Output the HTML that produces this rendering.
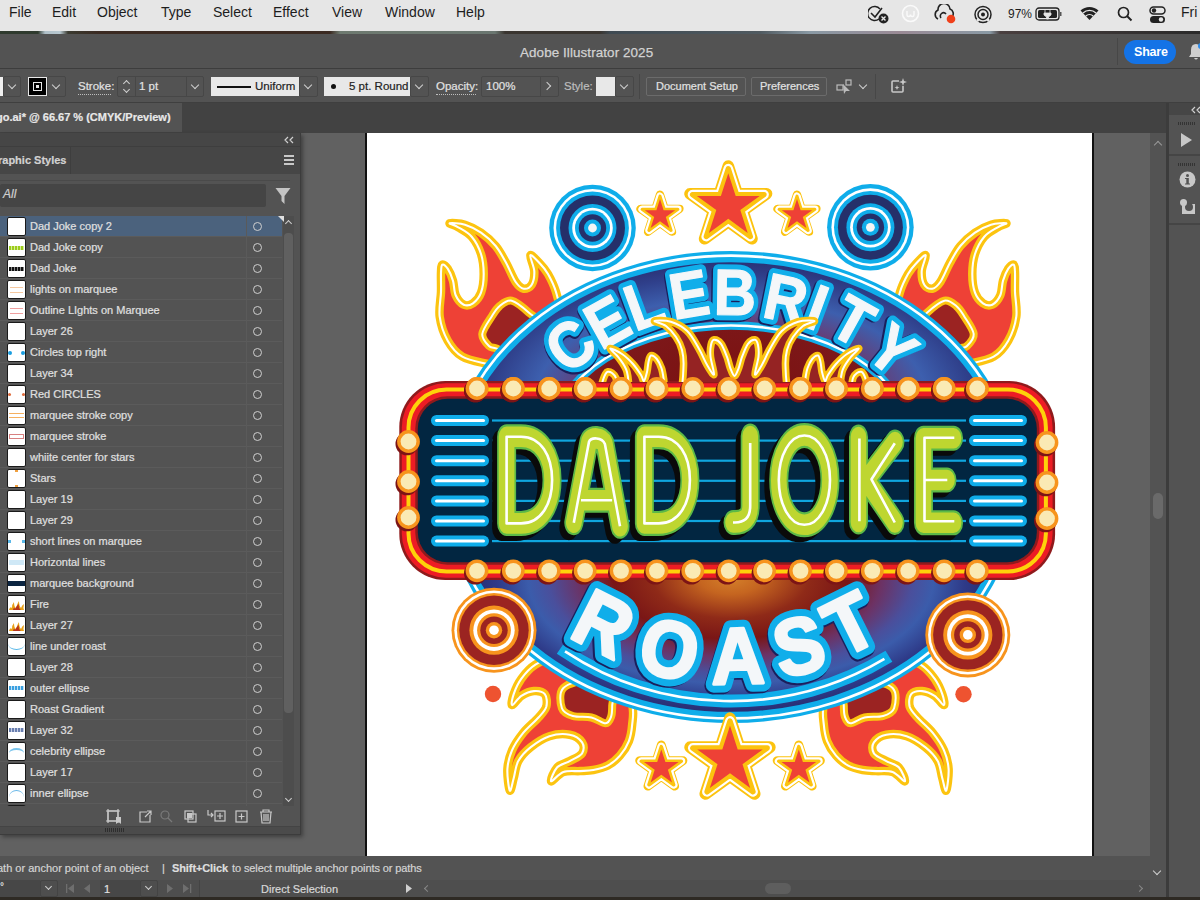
<!DOCTYPE html>
<html><head><meta charset="utf-8">
<style>
*{margin:0;padding:0;box-sizing:border-box}
html,body{width:1200px;height:900px;overflow:hidden;background:#535353;font-family:"Liberation Sans",sans-serif}
.a{position:absolute}
.t{position:absolute;white-space:pre;line-height:1}
#ctrl .t,#tabbar .t,#status .t,#bottombar .t,.row .nm,#panel .t{-webkit-text-stroke:0.2px currentColor}
#menubar{left:0;top:0;width:1200px;height:31px;background:#e6e6e6}
#menubar .t{font-size:14px;color:#1d1d1d;top:5px}
#wall{left:0;top:31px;width:1200px;height:3px;background:linear-gradient(90deg,#2f3a2e 0px,#2f3a2e 38px,#b0c0c8 45px,#b8c8d0 60px,#3a3a30 68px,#3b2a22 100px,#3b2a22 330px,#6e7a70 340px,#6a7670 495px,#3a3530 505px,#3a3530 600px,#3f4a52 610px,#505a60 760px,#8a9aa5 810px,#9a8a95 900px,#8a9aa5 990px,#4a4040 1000px,#2a2a2a 1200px)}
#titlebar{left:0;top:34px;width:1200px;height:35px;background:#535353;border-bottom:1px solid #3d3d3d}
#ctrl{left:0;top:69px;width:1200px;height:34px;background:#535353;border-bottom:1px solid #3f3f3f}
#tabbar{left:0;top:103px;width:1200px;height:30px;background:#424242}
#canvas{left:0;top:133px;width:1150px;height:723px;background:#616161}
#status{left:0;top:856px;width:1150px;height:24px;background:#535353}
#bottombar{left:0;top:880px;width:1150px;height:17px;background:#4e4e4e}
#wall2{left:0;top:897px;width:1200px;height:3px;background:#2e2a24}
#vscroll{left:1150px;top:133px;width:16px;height:723px;background:#535353}
#rdiv{left:1166px;top:103px;width:3px;height:797px;background:#3c3c3c}
#rpanel{left:1169px;top:103px;width:31px;height:794px;background:#535353}
.lt{color:#e2e2e2;font-size:11px}
.box{position:absolute;border:1px solid #474747;border-radius:2px}
.chev{position:absolute;width:6px;height:6px;border-right:1.3px solid #d0d0d0;border-bottom:1.3px solid #d0d0d0;transform:rotate(45deg)}
#panel{left:0;top:133px;width:301px;height:702px;background:#535353;border-right:1px solid #3c3c3c;border-bottom:1px solid #3c3c3c;box-shadow:2px 2px 4px rgba(0,0,0,0.35)}
.row{position:absolute;left:0;width:282px;height:21px;background:#535353;border-bottom:1px solid #5b5b5b}
.row .th{position:absolute;left:7px;top:1px;width:19px;height:19px;background:#fff;border:1.5px solid #1a1a1a;border-radius:2px;overflow:hidden}
.row .nm{position:absolute;left:30px;top:5px;font-size:11px;color:#e0e0e0;white-space:pre;line-height:1}
.row .dv{position:absolute;left:246px;top:0;width:1px;height:21px;background:#5a5a5a}
.row .ci{position:absolute;left:253px;top:6px;width:9px;height:9px;border:1.2px solid #cfcfcf;border-radius:50%}
</style></head><body>
<div id="menubar" class="a">
 <span class="t" style="left:9px">File</span>
 <span class="t" style="left:52px">Edit</span>
 <span class="t" style="left:97px">Object</span>
 <span class="t" style="left:161px">Type</span>
 <span class="t" style="left:213px">Select</span>
 <span class="t" style="left:273px">Effect</span>
 <span class="t" style="left:332px">View</span>
 <span class="t" style="left:385px">Window</span>
 <span class="t" style="left:456px">Help</span>

 <svg class="a" style="left:868px;top:5px" width="24" height="20" viewBox="0 0 24 20"><path d="M3 8 L7 12 L14 3" fill="none" stroke="#222" stroke-width="1.6"/><path d="M12 4 A7 7 0 1 0 11 14" fill="none" stroke="#222" stroke-width="1.4"/><circle cx="15.5" cy="13.5" r="5" fill="#222"/><path d="M13.5 11.5 L17.5 15.5 M17.5 11.5 L13.5 15.5" stroke="#e6e6e6" stroke-width="1.4"/></svg>
 <svg class="a" style="left:901px;top:4px" width="19" height="19" viewBox="0 0 19 19"><circle cx="9.5" cy="9.5" r="8" fill="none" stroke="#fafafa" stroke-width="1.6"/><path d="M6 7 V11 Q6 12.5 7.5 12.5 Q9.5 12.5 9.5 10.5 Q9.5 12.5 11.5 12.5 Q13 12.5 13 11 V7" fill="none" stroke="#fafafa" stroke-width="1.4"/></svg>
 <svg class="a" style="left:933px;top:4px" width="24" height="20" viewBox="0 0 24 20"><path d="M5 15 A5 5 0 0 1 5 6 A6 6 0 0 1 17 5 A5 5 0 0 1 19 13" fill="none" stroke="#222" stroke-width="1.6"/><path d="M8 14 A3 3 0 0 1 13 10" fill="none" stroke="#222" stroke-width="1.6"/><circle cx="18" cy="15" r="4.3" fill="#f0401a"/></svg>
 <svg class="a" style="left:973px;top:5px" width="20" height="20" viewBox="0 0 20 20"><circle cx="10" cy="9.5" r="8" fill="none" stroke="#222" stroke-width="1.5"/><circle cx="10" cy="9.5" r="5" fill="none" stroke="#222" stroke-width="1.5"/><circle cx="10" cy="9.5" r="2" fill="#222"/><path d="M4 16 L6 14 M16 16 L14 14" stroke="#e6e6e6" stroke-width="2.5"/></svg>
 <svg class="a" style="left:1035px;top:7px" width="28" height="15" viewBox="0 0 28 15"><rect x="1" y="1" width="23" height="12" rx="3" fill="none" stroke="#222" stroke-width="1.3"/><rect x="3" y="3" width="19" height="8" rx="1.5" fill="#222"/><path d="M10 3 V6 M15 3 V6 M9 6 H16 V8 L13.5 10 V12 H11.5 V10 L9 8Z" fill="#e6e6e6" stroke="#e6e6e6" stroke-width="0.8"/><rect x="25" y="5" width="1.5" height="4" fill="#555"/></svg>
 <svg class="a" style="left:1080px;top:6px" width="19" height="15" viewBox="0 0 19 15"><path d="M9.5 14 L0.5 4.5 A13 13 0 0 1 18.5 4.5Z" fill="#222"/><path d="M3 7 A9.5 9.5 0 0 1 16 7" fill="none" stroke="#e6e6e6" stroke-width="1.3"/><path d="M5.8 10 A5.5 5.5 0 0 1 13.2 10" fill="none" stroke="#e6e6e6" stroke-width="1.3"/></svg>
 <svg class="a" style="left:1117px;top:6px" width="16" height="16" viewBox="0 0 16 16"><circle cx="6.5" cy="6.5" r="5" fill="none" stroke="#222" stroke-width="1.7"/><path d="M10 10 L14.5 14.5" stroke="#222" stroke-width="1.9"/></svg>
 <svg class="a" style="left:1149px;top:6px" width="17" height="18" viewBox="0 0 17 18"><rect x="1" y="1" width="15" height="7" rx="3.5" fill="none" stroke="#222" stroke-width="1.5"/><circle cx="5" cy="4.5" r="2.2" fill="#222"/><rect x="1" y="10" width="15" height="7" rx="3.5" fill="#222"/><circle cx="12" cy="13.5" r="2.2" fill="#e6e6e6"/></svg>
 <span class="t" style="left:1008px;top:8px;font-size:12px">97%</span>
 <span class="t" style="left:1181px">Fri</span>
</div>
<div id="wall" class="a"></div>
<div id="titlebar" class="a">
 <span class="t" style="left:520px;top:12px;font-size:13.4px;color:#d2d2d2;-webkit-text-stroke:0.25px #d2d2d2;letter-spacing:0.1px">Adobe Illustrator 2025</span>
 <div class="a" style="left:1117px;top:4px;width:1px;height:27px;background:#474747"></div>
 <div class="a" style="left:1124px;top:6px;width:52px;height:24px;border-radius:12px;background:#1473e6"></div>
 <span class="t" style="left:1134px;top:12px;font-size:12.5px;font-weight:bold;color:#fff;letter-spacing:-0.2px">Share</span>
 <svg class="a" style="left:1188px;top:8px" width="16" height="20" viewBox="0 0 16 20"><path d="M8 2 Q3 2 3 8 V12 L1 15 H15 L13 12 V8 Q13 2 8 2Z M6 16 Q8 19 10 16Z" fill="#cfcfcf"/><circle cx="13" cy="4" r="3" fill="#2d8ceb"/></svg>
</div>
<div id="ctrl" class="a">
 <div class="a" style="left:0;top:8px;width:3px;height:19px;background:#f0f0f0"></div>
 <div class="box" style="left:3px;top:7px;width:18px;height:21px"></div>
 <div class="chev" style="left:9px;top:13px"></div>
 <div class="a" style="left:28px;top:8px;width:19px;height:19px;background:#000;border:1.5px solid #e8e8e8"></div>
 <div class="a" style="left:33px;top:13px;width:9px;height:9px;border:1.5px solid #e8e8e8"></div>
 <div class="a" style="left:36px;top:16px;width:3px;height:3px;background:#e8e8e8"></div>
 <div class="box" style="left:47px;top:7px;width:19px;height:21px"></div>
 <div class="chev" style="left:53px;top:13px"></div>
 <span class="t lt" style="left:78px;top:12px;font-size:11.5px">Stroke:</span>
 <div class="a" style="left:78px;top:25px;width:33px;height:0;border-top:1px dotted #bdbdbd"></div>
 <div class="box" style="left:117px;top:7px;width:87px;height:21px"></div>
 <div class="a" style="left:135px;top:7px;width:1px;height:21px;background:#474747"></div>
 <div class="a" style="left:186px;top:7px;width:1px;height:21px;background:#474747"></div>
 <div class="chev" style="left:124px;top:12px;transform:rotate(225deg);width:5px;height:5px"></div>
 <div class="chev" style="left:124px;top:18px;width:5px;height:5px"></div>
 <span class="t lt" style="left:139px;top:12px;font-size:11.5px">1 pt</span>
 <div class="chev" style="left:192px;top:13px"></div>
 <div class="a" style="left:211px;top:8px;width:88px;height:19px;background:#e8e8e8"></div>
 <div class="a" style="left:217px;top:17px;width:34px;height:2px;background:#111"></div>
 <span class="t" style="left:255px;top:12px;font-size:11.5px;color:#222">Uniform</span>
 <div class="box" style="left:299px;top:7px;width:19px;height:21px"></div>
 <div class="chev" style="left:305px;top:13px"></div>
 <div class="a" style="left:324px;top:8px;width:86px;height:19px;background:#e8e8e8"></div>
 <div class="a" style="left:331px;top:15px;width:5px;height:5px;border-radius:50%;background:#111"></div>
 <span class="t" style="left:349px;top:12px;font-size:11.5px;color:#222">5 pt. Round</span>
 <div class="box" style="left:410px;top:7px;width:19px;height:21px"></div>
 <div class="chev" style="left:416px;top:13px"></div>
 <span class="t lt" style="left:436px;top:12px;font-size:11.5px">Opacity:</span>
 <div class="a" style="left:436px;top:25px;width:40px;height:0;border-top:1px dotted #bdbdbd"></div>
 <div class="box" style="left:481px;top:7px;width:78px;height:21px"></div>
 <div class="a" style="left:540px;top:7px;width:1px;height:21px;background:#474747"></div>
 <span class="t lt" style="left:486px;top:12px;font-size:11.5px">100%</span>
 <div class="chev" style="left:544px;top:14px;transform:rotate(-45deg)"></div>
 <span class="t" style="left:564px;top:12px;font-size:11.5px;color:#bdbdbd">Style:</span>
 <div class="a" style="left:596px;top:8px;width:19px;height:19px;background:#e8e8e8"></div>
 <div class="box" style="left:615px;top:7px;width:19px;height:21px"></div>
 <div class="chev" style="left:621px;top:13px"></div>
 <div class="a" style="left:639px;top:5px;width:1px;height:25px;background:#474747"></div>
 <div class="box" style="left:646px;top:8px;width:100px;height:19px;border-color:#6b6b6b"></div>
 <span class="t lt" style="left:656px;top:12px;font-size:11px">Document Setup</span>
 <div class="box" style="left:751px;top:8px;width:76px;height:19px;border-color:#6b6b6b"></div>
 <span class="t lt" style="left:760px;top:12px;font-size:11px">Preferences</span>
 <svg class="a" style="left:836px;top:10px" width="18" height="16" viewBox="0 0 18 16"><rect x="1" y="6" width="6" height="5" fill="none" stroke="#bbb" stroke-width="1.2"/><rect x="10" y="1" width="5" height="5" fill="none" stroke="#bbb" stroke-width="1.2"/><path d="M7 5 L14 12 L10 12 L8 15 Z" fill="#bbb"/></svg>
 <div class="chev" style="left:860px;top:13px"></div>
 <div class="a" style="left:875px;top:5px;width:1px;height:25px;background:#474747"></div>
 <svg class="a" style="left:890px;top:9px" width="17" height="16" viewBox="0 0 17 16"><path d="M9 3 H3 Q2 3 2 4 V13 Q2 14 3 14 H12 Q13 14 13 13 V8" fill="none" stroke="#c8c8c8" stroke-width="1.6"/><path d="M13 0 L14 3 L17 4 L14 5 L13 8 L12 5 L9 4 L12 3Z M7 7 L7.7 9 L9.5 9.6 L7.7 10.3 L7 12 L6.3 10.3 L4.5 9.6 L6.3 9Z" fill="#c8c8c8"/></svg>
</div>
<div id="tabbar" class="a">
 <div class="a" style="left:0;top:0;width:182px;height:29px;background:#535353"></div>
 <span class="t" style="left:-4px;top:9px;font-size:11px;font-weight:bold;color:#e8e8e8">go.ai* @ 66.67 % (CMYK/Preview)</span>
</div>
<div id="canvas" class="a">
 <div class="a" style="left:365px;top:0;width:729px;height:723px;background:#fff;border-left:2px solid #111;border-right:2px solid #111"></div>
 <svg class="a" style="left:367px;top:0" width="725" height="723" viewBox="367 133 725 723">
<defs>
<radialGradient id="upg" gradientUnits="userSpaceOnUse" cx="731" cy="400" r="280" gradientTransform="translate(731 400) scale(1 0.52) translate(-731 -400)">
 <stop offset="0" stop-color="#c05a1c"/>
 <stop offset="0.42" stop-color="#7a1e2a"/>
 <stop offset="0.52" stop-color="#6b3a70"/>
 <stop offset="0.70" stop-color="#3d5fae"/>
 <stop offset="0.86" stop-color="#2f3f8a"/>
 <stop offset="1" stop-color="#272b6b"/>
</radialGradient>
<radialGradient id="lowg" gradientUnits="userSpaceOnUse" cx="731" cy="578" r="260" gradientTransform="translate(731 578) scale(1 0.52) translate(-731 -578)">
 <stop offset="0" stop-color="#d5802a"/>
 <stop offset="0.12" stop-color="#c56520"/>
 <stop offset="0.30" stop-color="#8f2a18"/>
 <stop offset="0.45" stop-color="#7a1616"/>
 <stop offset="0.58" stop-color="#6c3264"/>
 <stop offset="0.70" stop-color="#4a4f9c"/>
 <stop offset="0.78" stop-color="#3b5cab"/>
 <stop offset="0.90" stop-color="#2e3a88"/>
 <stop offset="1" stop-color="#282d70"/>
</radialGradient>
<clipPath id="topclip"><rect x="400" y="250" width="660" height="132"/></clipPath>
<clipPath id="domeclip"><ellipse cx="731" cy="487" rx="285" ry="233"/></clipPath>
<radialGradient id="innerg" gradientUnits="userSpaceOnUse" cx="733" cy="400" r="180" gradientTransform="translate(733 400) scale(1 0.7) translate(-733 -400)">
 <stop offset="0" stop-color="#b64a1e"/>
 <stop offset="0.35" stop-color="#7c1414"/>
 <stop offset="1" stop-color="#7d1c20"/>
</radialGradient>
<clipPath id="innerclip"><ellipse cx="731" cy="436.5" rx="175" ry="109"/></clipPath>
</defs>
<path d="M449.7 223.3 C450.8 222.9 459.8 223.1 465.0 224.7 C470.2 226.3 475.9 229.1 481.0 232.7 C486.1 236.2 491.5 240.9 495.7 246.0 C499.9 251.1 503.0 257.3 506.3 263.3 C509.6 269.3 512.8 277.8 515.7 282.0 C518.6 286.2 521.0 288.2 523.7 288.7 C526.4 289.1 529.9 287.6 531.7 284.7 C533.5 281.8 534.5 276.2 534.3 271.3 C534.1 266.4 529.4 256.6 530.3 255.3 C531.2 254.0 536.8 260.2 539.7 263.3 C542.7 266.4 545.3 269.2 548.0 274.0 C550.7 278.8 553.7 284.3 556.0 292.0 C558.3 299.7 561.3 310.3 562.0 320.0 C562.7 329.7 563.7 341.3 560.0 350.0 C556.3 358.7 548.3 369.0 540.0 372.0 C531.7 375.0 518.7 369.3 510.0 368.0 C501.3 366.7 495.6 365.9 487.7 364.0 C479.8 362.1 469.0 360.6 462.3 356.7 C455.6 352.8 451.5 347.4 447.7 340.7 C443.9 334.0 440.8 324.8 439.7 316.7 C438.6 308.6 440.8 299.3 441.0 292.0 C441.2 284.7 440.8 277.2 441.0 272.7 C441.2 268.1 441.2 265.4 442.3 264.7 C443.4 264.0 445.9 266.0 447.7 268.7 C449.5 271.4 451.7 276.3 453.0 280.7 C454.3 285.1 453.9 291.3 455.7 295.3 C457.5 299.3 460.8 303.4 463.7 304.7 C466.6 306.0 470.1 305.3 473.0 303.3 C475.9 301.3 479.2 297.6 481.0 292.7 C482.8 287.8 483.7 280.4 483.7 274.0 C483.7 267.6 483.0 260.2 481.0 254.0 C479.0 247.8 475.5 241.1 471.7 236.7 C467.9 232.2 462.0 229.5 458.3 227.3 C454.6 225.1 448.6 223.7 449.7 223.3Z" fill="#ee4136" stroke="#fcc410" stroke-width="8.5" stroke-linejoin="round"/><path d="M449.7 223.3 C450.8 222.9 459.8 223.1 465.0 224.7 C470.2 226.3 475.9 229.1 481.0 232.7 C486.1 236.2 491.5 240.9 495.7 246.0 C499.9 251.1 503.0 257.3 506.3 263.3 C509.6 269.3 512.8 277.8 515.7 282.0 C518.6 286.2 521.0 288.2 523.7 288.7 C526.4 289.1 529.9 287.6 531.7 284.7 C533.5 281.8 534.5 276.2 534.3 271.3 C534.1 266.4 529.4 256.6 530.3 255.3 C531.2 254.0 536.8 260.2 539.7 263.3 C542.7 266.4 545.3 269.2 548.0 274.0 C550.7 278.8 553.7 284.3 556.0 292.0 C558.3 299.7 561.3 310.3 562.0 320.0 C562.7 329.7 563.7 341.3 560.0 350.0 C556.3 358.7 548.3 369.0 540.0 372.0 C531.7 375.0 518.7 369.3 510.0 368.0 C501.3 366.7 495.6 365.9 487.7 364.0 C479.8 362.1 469.0 360.6 462.3 356.7 C455.6 352.8 451.5 347.4 447.7 340.7 C443.9 334.0 440.8 324.8 439.7 316.7 C438.6 308.6 440.8 299.3 441.0 292.0 C441.2 284.7 440.8 277.2 441.0 272.7 C441.2 268.1 441.2 265.4 442.3 264.7 C443.4 264.0 445.9 266.0 447.7 268.7 C449.5 271.4 451.7 276.3 453.0 280.7 C454.3 285.1 453.9 291.3 455.7 295.3 C457.5 299.3 460.8 303.4 463.7 304.7 C466.6 306.0 470.1 305.3 473.0 303.3 C475.9 301.3 479.2 297.6 481.0 292.7 C482.8 287.8 483.7 280.4 483.7 274.0 C483.7 267.6 483.0 260.2 481.0 254.0 C479.0 247.8 475.5 241.1 471.7 236.7 C467.9 232.2 462.0 229.5 458.3 227.3 C454.6 225.1 448.6 223.7 449.7 223.3Z" fill="none" stroke="#fff" stroke-width="2.1"/><path d="M482.3 334.0 C482.8 329.0 489.1 320.7 492.0 316.0 C494.9 311.3 496.4 308.6 499.7 306.0 C503.0 303.4 506.8 299.6 511.7 300.7 C516.6 301.8 523.5 307.8 529.0 312.7 C534.5 317.6 546.5 322.1 545.0 330.0 C543.5 337.9 528.0 356.9 520.0 360.0 C512.0 363.1 502.2 351.0 497.0 348.7 C491.8 346.4 491.4 348.4 489.0 346.0 C486.6 343.6 481.8 339.0 482.3 334.0Z" fill="#9b2322" stroke="#fcc410" stroke-width="8" stroke-linejoin="round"/><path d="M482.3 334.0 C482.8 329.0 489.1 320.7 492.0 316.0 C494.9 311.3 496.4 308.6 499.7 306.0 C503.0 303.4 506.8 299.6 511.7 300.7 C516.6 301.8 523.5 307.8 529.0 312.7 C534.5 317.6 546.5 322.1 545.0 330.0 C543.5 337.9 528.0 356.9 520.0 360.0 C512.0 363.1 502.2 351.0 497.0 348.7 C491.8 346.4 491.4 348.4 489.0 346.0 C486.6 343.6 481.8 339.0 482.3 334.0Z" fill="none" stroke="#fff" stroke-width="2"/>
<path d="M1006.3 223.3 C1005.2 222.9 996.2 223.1 991.0 224.7 C985.8 226.3 980.1 229.1 975.0 232.7 C969.9 236.2 964.5 240.9 960.3 246.0 C956.1 251.1 953.0 257.3 949.7 263.3 C946.4 269.3 943.2 277.8 940.3 282.0 C937.4 286.2 935.0 288.2 932.3 288.7 C929.6 289.1 926.1 287.6 924.3 284.7 C922.5 281.8 921.5 276.2 921.7 271.3 C921.9 266.4 926.6 256.6 925.7 255.3 C924.8 254.0 919.2 260.2 916.3 263.3 C913.3 266.4 910.7 269.2 908.0 274.0 C905.3 278.8 902.3 284.3 900.0 292.0 C897.7 299.7 894.7 310.3 894.0 320.0 C893.3 329.7 892.3 341.3 896.0 350.0 C899.7 358.7 907.7 369.0 916.0 372.0 C924.3 375.0 937.3 369.3 946.0 368.0 C954.7 366.7 960.3 365.9 968.3 364.0 C976.2 362.1 987.0 360.6 993.7 356.7 C1000.4 352.8 1004.5 347.4 1008.3 340.7 C1012.1 334.0 1015.2 324.8 1016.3 316.7 C1017.4 308.6 1015.2 299.3 1015.0 292.0 C1014.8 284.7 1015.2 277.2 1015.0 272.7 C1014.8 268.1 1014.8 265.4 1013.7 264.7 C1012.6 264.0 1010.1 266.0 1008.3 268.7 C1006.5 271.4 1004.3 276.3 1003.0 280.7 C1001.7 285.1 1002.1 291.3 1000.3 295.3 C998.5 299.3 995.2 303.4 992.3 304.7 C989.4 306.0 985.9 305.3 983.0 303.3 C980.1 301.3 976.8 297.6 975.0 292.7 C973.2 287.8 972.3 280.4 972.3 274.0 C972.3 267.6 973.0 260.2 975.0 254.0 C977.0 247.8 980.5 241.1 984.3 236.7 C988.1 232.2 994.0 229.5 997.7 227.3 C1001.4 225.1 1007.4 223.7 1006.3 223.3Z" fill="#ee4136" stroke="#fcc410" stroke-width="8.5" stroke-linejoin="round"/><path d="M1006.3 223.3 C1005.2 222.9 996.2 223.1 991.0 224.7 C985.8 226.3 980.1 229.1 975.0 232.7 C969.9 236.2 964.5 240.9 960.3 246.0 C956.1 251.1 953.0 257.3 949.7 263.3 C946.4 269.3 943.2 277.8 940.3 282.0 C937.4 286.2 935.0 288.2 932.3 288.7 C929.6 289.1 926.1 287.6 924.3 284.7 C922.5 281.8 921.5 276.2 921.7 271.3 C921.9 266.4 926.6 256.6 925.7 255.3 C924.8 254.0 919.2 260.2 916.3 263.3 C913.3 266.4 910.7 269.2 908.0 274.0 C905.3 278.8 902.3 284.3 900.0 292.0 C897.7 299.7 894.7 310.3 894.0 320.0 C893.3 329.7 892.3 341.3 896.0 350.0 C899.7 358.7 907.7 369.0 916.0 372.0 C924.3 375.0 937.3 369.3 946.0 368.0 C954.7 366.7 960.3 365.9 968.3 364.0 C976.2 362.1 987.0 360.6 993.7 356.7 C1000.4 352.8 1004.5 347.4 1008.3 340.7 C1012.1 334.0 1015.2 324.8 1016.3 316.7 C1017.4 308.6 1015.2 299.3 1015.0 292.0 C1014.8 284.7 1015.2 277.2 1015.0 272.7 C1014.8 268.1 1014.8 265.4 1013.7 264.7 C1012.6 264.0 1010.1 266.0 1008.3 268.7 C1006.5 271.4 1004.3 276.3 1003.0 280.7 C1001.7 285.1 1002.1 291.3 1000.3 295.3 C998.5 299.3 995.2 303.4 992.3 304.7 C989.4 306.0 985.9 305.3 983.0 303.3 C980.1 301.3 976.8 297.6 975.0 292.7 C973.2 287.8 972.3 280.4 972.3 274.0 C972.3 267.6 973.0 260.2 975.0 254.0 C977.0 247.8 980.5 241.1 984.3 236.7 C988.1 232.2 994.0 229.5 997.7 227.3 C1001.4 225.1 1007.4 223.7 1006.3 223.3Z" fill="none" stroke="#fff" stroke-width="2.1"/><path d="M973.7 334.0 C973.2 329.0 966.9 320.7 964.0 316.0 C961.1 311.3 959.6 308.6 956.3 306.0 C953.0 303.4 949.2 299.6 944.3 300.7 C939.4 301.8 932.5 307.8 927.0 312.7 C921.5 317.6 909.5 322.1 911.0 330.0 C912.5 337.9 928.0 356.9 936.0 360.0 C944.0 363.1 953.8 351.0 959.0 348.7 C964.2 346.4 964.5 348.4 967.0 346.0 C969.5 343.6 974.2 339.0 973.7 334.0Z" fill="#9b2322" stroke="#fcc410" stroke-width="8" stroke-linejoin="round"/><path d="M973.7 334.0 C973.2 329.0 966.9 320.7 964.0 316.0 C961.1 311.3 959.6 308.6 956.3 306.0 C953.0 303.4 949.2 299.6 944.3 300.7 C939.4 301.8 932.5 307.8 927.0 312.7 C921.5 317.6 909.5 322.1 911.0 330.0 C912.5 337.9 928.0 356.9 936.0 360.0 C944.0 363.1 953.8 351.0 959.0 348.7 C964.2 346.4 964.5 348.4 967.0 346.0 C969.5 343.6 974.2 339.0 973.7 334.0Z" fill="none" stroke="#fff" stroke-width="2"/>
<path d="M535.4 664.7 C529.0 668.7 525.0 673.8 521.4 678.7 C517.8 683.6 515.2 689.8 513.7 694.2 C512.2 698.6 510.8 704.8 512.1 705.1 C513.4 705.4 517.8 698.1 521.4 695.8 C525.0 693.5 530.0 691.4 533.9 691.1 C537.8 690.8 542.7 691.6 544.8 694.2 C546.9 696.8 547.3 702.8 546.3 706.7 C545.2 710.6 542.4 713.1 538.5 717.5 C534.6 721.9 527.4 727.6 523.0 733.1 C518.6 738.6 514.7 744.2 512.1 750.2 C509.5 756.2 507.8 762.2 507.4 768.9 C507.0 775.6 508.8 789.0 509.8 790.6 C510.9 792.2 512.3 783.1 513.7 778.2 C515.1 773.3 515.4 766.3 518.3 761.1 C521.1 755.9 525.6 751.2 530.8 747.1 C536.0 743.0 542.9 738.3 549.4 736.2 C555.9 734.1 564.2 733.7 569.7 734.7 C575.2 735.7 580.0 739.3 582.1 742.4 C584.2 745.5 584.2 750.2 582.1 753.3 C580.0 756.4 573.9 758.8 569.7 761.1 C565.6 763.4 560.3 763.9 557.2 767.3 C554.1 770.7 550.0 780.5 551.0 781.3 C552.0 782.1 558.6 773.7 563.4 772.0 C568.2 770.3 575.0 771.4 580.0 771.1 C585.0 770.8 588.7 770.9 593.3 770.0 C597.9 769.1 603.3 768.0 607.8 765.6 C612.2 763.2 616.5 759.7 620.0 755.6 C623.5 751.5 626.9 746.3 628.9 741.1 C630.9 735.9 631.7 730.4 632.2 724.4 C632.8 718.4 634.2 712.4 632.2 705.0 C630.2 697.6 627.0 687.2 620.0 680.0 C613.0 672.8 600.0 666.2 590.0 662.0 C580.0 657.8 569.1 654.5 560.0 655.0 C550.9 655.5 541.8 660.8 535.4 664.7Z" fill="#ee4136" stroke="#fcc410" stroke-width="8.5" stroke-linejoin="round"/><path d="M535.4 664.7 C529.0 668.7 525.0 673.8 521.4 678.7 C517.8 683.6 515.2 689.8 513.7 694.2 C512.2 698.6 510.8 704.8 512.1 705.1 C513.4 705.4 517.8 698.1 521.4 695.8 C525.0 693.5 530.0 691.4 533.9 691.1 C537.8 690.8 542.7 691.6 544.8 694.2 C546.9 696.8 547.3 702.8 546.3 706.7 C545.2 710.6 542.4 713.1 538.5 717.5 C534.6 721.9 527.4 727.6 523.0 733.1 C518.6 738.6 514.7 744.2 512.1 750.2 C509.5 756.2 507.8 762.2 507.4 768.9 C507.0 775.6 508.8 789.0 509.8 790.6 C510.9 792.2 512.3 783.1 513.7 778.2 C515.1 773.3 515.4 766.3 518.3 761.1 C521.1 755.9 525.6 751.2 530.8 747.1 C536.0 743.0 542.9 738.3 549.4 736.2 C555.9 734.1 564.2 733.7 569.7 734.7 C575.2 735.7 580.0 739.3 582.1 742.4 C584.2 745.5 584.2 750.2 582.1 753.3 C580.0 756.4 573.9 758.8 569.7 761.1 C565.6 763.4 560.3 763.9 557.2 767.3 C554.1 770.7 550.0 780.5 551.0 781.3 C552.0 782.1 558.6 773.7 563.4 772.0 C568.2 770.3 575.0 771.4 580.0 771.1 C585.0 770.8 588.7 770.9 593.3 770.0 C597.9 769.1 603.3 768.0 607.8 765.6 C612.2 763.2 616.5 759.7 620.0 755.6 C623.5 751.5 626.9 746.3 628.9 741.1 C630.9 735.9 631.7 730.4 632.2 724.4 C632.8 718.4 634.2 712.4 632.2 705.0 C630.2 697.6 627.0 687.2 620.0 680.0 C613.0 672.8 600.0 666.2 590.0 662.0 C580.0 657.8 569.1 654.5 560.0 655.0 C550.9 655.5 541.8 660.8 535.4 664.7Z" fill="none" stroke="#fff" stroke-width="2.1"/><path d="M563.4 688.0 C558.7 692.7 560.3 703.5 561.9 708.2 C563.5 712.9 567.9 714.5 572.8 716.0 C577.7 717.5 585.9 716.3 591.4 717.5 C596.9 718.7 602.3 723.4 605.6 723.3 C608.9 723.2 610.0 719.7 611.1 716.7 C612.2 713.8 612.1 710.1 612.2 705.6 C612.4 701.1 615.7 694.3 612.0 690.0 C608.3 685.7 598.1 680.3 590.0 680.0 C581.9 679.7 568.1 683.3 563.4 688.0Z" fill="#9b2322" stroke="#fcc410" stroke-width="8" stroke-linejoin="round"/><path d="M563.4 688.0 C558.7 692.7 560.3 703.5 561.9 708.2 C563.5 712.9 567.9 714.5 572.8 716.0 C577.7 717.5 585.9 716.3 591.4 717.5 C596.9 718.7 602.3 723.4 605.6 723.3 C608.9 723.2 610.0 719.7 611.1 716.7 C612.2 713.8 612.1 710.1 612.2 705.6 C612.4 701.1 615.7 694.3 612.0 690.0 C608.3 685.7 598.1 680.3 590.0 680.0 C581.9 679.7 568.1 683.3 563.4 688.0Z" fill="none" stroke="#fff" stroke-width="2"/>
<path d="M920.6 664.7 C927.0 668.7 931.0 673.8 934.6 678.7 C938.2 683.6 940.8 689.8 942.3 694.2 C943.8 698.6 945.2 704.8 943.9 705.1 C942.6 705.4 938.2 698.1 934.6 695.8 C931.0 693.5 926.0 691.4 922.1 691.1 C918.2 690.8 913.3 691.6 911.2 694.2 C909.1 696.8 908.7 702.8 909.7 706.7 C910.8 710.6 913.6 713.1 917.5 717.5 C921.4 721.9 928.6 727.6 933.0 733.1 C937.4 738.6 941.3 744.2 943.9 750.2 C946.5 756.2 948.2 762.2 948.6 768.9 C949.0 775.6 947.2 789.0 946.2 790.6 C945.2 792.2 943.7 783.1 942.3 778.2 C940.9 773.3 940.6 766.3 937.7 761.1 C934.9 755.9 930.4 751.2 925.2 747.1 C920.0 743.0 913.1 738.3 906.6 736.2 C900.1 734.1 891.8 733.7 886.3 734.7 C880.8 735.7 876.0 739.3 873.9 742.4 C871.8 745.5 871.8 750.2 873.9 753.3 C876.0 756.4 882.1 758.8 886.3 761.1 C890.4 763.4 895.7 763.9 898.8 767.3 C901.9 770.7 906.0 780.5 905.0 781.3 C904.0 782.1 897.4 773.7 892.6 772.0 C887.8 770.3 881.0 771.4 876.0 771.1 C871.0 770.8 867.3 770.9 862.7 770.0 C858.1 769.1 852.7 768.0 848.2 765.6 C843.8 763.2 839.5 759.7 836.0 755.6 C832.5 751.5 829.1 746.3 827.1 741.1 C825.1 735.9 824.3 730.4 823.8 724.4 C823.2 718.4 821.8 712.4 823.8 705.0 C825.8 697.6 829.0 687.2 836.0 680.0 C843.0 672.8 856.0 666.2 866.0 662.0 C876.0 657.8 886.9 654.5 896.0 655.0 C905.1 655.5 914.2 660.8 920.6 664.7Z" fill="#ee4136" stroke="#fcc410" stroke-width="8.5" stroke-linejoin="round"/><path d="M920.6 664.7 C927.0 668.7 931.0 673.8 934.6 678.7 C938.2 683.6 940.8 689.8 942.3 694.2 C943.8 698.6 945.2 704.8 943.9 705.1 C942.6 705.4 938.2 698.1 934.6 695.8 C931.0 693.5 926.0 691.4 922.1 691.1 C918.2 690.8 913.3 691.6 911.2 694.2 C909.1 696.8 908.7 702.8 909.7 706.7 C910.8 710.6 913.6 713.1 917.5 717.5 C921.4 721.9 928.6 727.6 933.0 733.1 C937.4 738.6 941.3 744.2 943.9 750.2 C946.5 756.2 948.2 762.2 948.6 768.9 C949.0 775.6 947.2 789.0 946.2 790.6 C945.2 792.2 943.7 783.1 942.3 778.2 C940.9 773.3 940.6 766.3 937.7 761.1 C934.9 755.9 930.4 751.2 925.2 747.1 C920.0 743.0 913.1 738.3 906.6 736.2 C900.1 734.1 891.8 733.7 886.3 734.7 C880.8 735.7 876.0 739.3 873.9 742.4 C871.8 745.5 871.8 750.2 873.9 753.3 C876.0 756.4 882.1 758.8 886.3 761.1 C890.4 763.4 895.7 763.9 898.8 767.3 C901.9 770.7 906.0 780.5 905.0 781.3 C904.0 782.1 897.4 773.7 892.6 772.0 C887.8 770.3 881.0 771.4 876.0 771.1 C871.0 770.8 867.3 770.9 862.7 770.0 C858.1 769.1 852.7 768.0 848.2 765.6 C843.8 763.2 839.5 759.7 836.0 755.6 C832.5 751.5 829.1 746.3 827.1 741.1 C825.1 735.9 824.3 730.4 823.8 724.4 C823.2 718.4 821.8 712.4 823.8 705.0 C825.8 697.6 829.0 687.2 836.0 680.0 C843.0 672.8 856.0 666.2 866.0 662.0 C876.0 657.8 886.9 654.5 896.0 655.0 C905.1 655.5 914.2 660.8 920.6 664.7Z" fill="none" stroke="#fff" stroke-width="2.1"/><path d="M892.6 688.0 C897.3 692.7 895.7 703.5 894.1 708.2 C892.5 712.9 888.1 714.5 883.2 716.0 C878.3 717.5 870.1 716.3 864.6 717.5 C859.1 718.7 853.7 723.4 850.4 723.3 C847.1 723.2 846.0 719.7 844.9 716.7 C843.8 713.8 843.9 710.1 843.8 705.6 C843.6 701.1 840.3 694.3 844.0 690.0 C847.7 685.7 857.9 680.3 866.0 680.0 C874.1 679.7 887.9 683.3 892.6 688.0Z" fill="#9b2322" stroke="#fcc410" stroke-width="8" stroke-linejoin="round"/><path d="M892.6 688.0 C897.3 692.7 895.7 703.5 894.1 708.2 C892.5 712.9 888.1 714.5 883.2 716.0 C878.3 717.5 870.1 716.3 864.6 717.5 C859.1 718.7 853.7 723.4 850.4 723.3 C847.1 723.2 846.0 719.7 844.9 716.7 C843.8 713.8 843.9 710.1 843.8 705.6 C843.6 701.1 840.3 694.3 844.0 690.0 C847.7 685.7 857.9 680.3 866.0 680.0 C874.1 679.7 887.9 683.3 892.6 688.0Z" fill="none" stroke="#fff" stroke-width="2"/>
<g clip-path="url(#domeclip)"><rect x="440" y="250" width="590" height="230" fill="url(#upg)"/><rect x="440" y="480" width="590" height="250" fill="url(#lowg)"/></g>
<ellipse cx="731" cy="436.5" rx="177" ry="111" fill="url(#innerg)"/>
<ellipse cx="731" cy="436.5" rx="177" ry="111" fill="none" stroke="#12aee8" stroke-width="8.5"/>
<ellipse cx="731" cy="436.5" rx="177" ry="111" fill="none" stroke="#fff" stroke-width="2.6"/>
<ellipse cx="731" cy="487" rx="282.4" ry="230.4" fill="none" stroke="#0fadea" stroke-width="11.2"/>
<ellipse cx="731" cy="487" rx="283.4" ry="231.4" fill="none" stroke="#fff" stroke-width="2.6"/>
<path d="M560.5 648.3 A301 301 0 0 0 888.9 656.2" fill="none" stroke="#0fadea" stroke-width="13"/>
<path d="M565 651.4 A301 301 0 0 0 884.4 658.9" fill="none" stroke="#fff" stroke-width="2.6"/>
<circle cx="592.5" cy="228.0" r="43.3" fill="#0fadea"/><circle cx="592.5" cy="228.0" r="39.0" fill="#fff"/><circle cx="592.5" cy="228.0" r="36.4" fill="#0fadea"/><circle cx="592.5" cy="228.0" r="32.5" fill="#25306a"/><circle cx="592.5" cy="228.0" r="24.0" fill="#0fadea"/><circle cx="592.5" cy="228.0" r="20.3" fill="#fff"/><circle cx="592.5" cy="228.0" r="17.5" fill="#0fadea"/><circle cx="592.5" cy="228.0" r="13.7" fill="#25306a"/><circle cx="592.5" cy="228.0" r="8.5" fill="#0fadea"/><circle cx="592.5" cy="228.0" r="4.4" fill="#f4f6f6"/>
<circle cx="870.4" cy="227.3" r="43.3" fill="#0fadea"/><circle cx="870.4" cy="227.3" r="39.0" fill="#fff"/><circle cx="870.4" cy="227.3" r="36.4" fill="#0fadea"/><circle cx="870.4" cy="227.3" r="32.5" fill="#25306a"/><circle cx="870.4" cy="227.3" r="24.0" fill="#0fadea"/><circle cx="870.4" cy="227.3" r="20.3" fill="#fff"/><circle cx="870.4" cy="227.3" r="17.5" fill="#0fadea"/><circle cx="870.4" cy="227.3" r="13.7" fill="#25306a"/><circle cx="870.4" cy="227.3" r="8.5" fill="#0fadea"/><circle cx="870.4" cy="227.3" r="4.4" fill="#f4f6f6"/>
<circle cx="494.0" cy="630.2" r="42.5" fill="#f7941d"/><circle cx="494.0" cy="630.2" r="39.7" fill="#fff"/><circle cx="494.0" cy="630.2" r="37.1" fill="#f7941d"/><circle cx="494.0" cy="630.2" r="34.7" fill="#9b2421"/><circle cx="494.0" cy="630.2" r="24.6" fill="#f7941d"/><circle cx="494.0" cy="630.2" r="20.7" fill="#fff"/><circle cx="494.0" cy="630.2" r="16.9" fill="#f7941d"/><circle cx="494.0" cy="630.2" r="13.7" fill="#9b2421"/><circle cx="494.0" cy="630.2" r="8.2" fill="#f7941d"/><circle cx="494.0" cy="630.2" r="4.8" fill="#fff"/>
<circle cx="967.8" cy="634.9" r="42.5" fill="#f7941d"/><circle cx="967.8" cy="634.9" r="39.7" fill="#fff"/><circle cx="967.8" cy="634.9" r="37.1" fill="#f7941d"/><circle cx="967.8" cy="634.9" r="34.7" fill="#9b2421"/><circle cx="967.8" cy="634.9" r="24.6" fill="#f7941d"/><circle cx="967.8" cy="634.9" r="20.7" fill="#fff"/><circle cx="967.8" cy="634.9" r="16.9" fill="#f7941d"/><circle cx="967.8" cy="634.9" r="13.7" fill="#9b2421"/><circle cx="967.8" cy="634.9" r="8.2" fill="#f7941d"/><circle cx="967.8" cy="634.9" r="4.8" fill="#fff"/>
<circle cx="493" cy="694" r="8.2" fill="#ee5330"/><circle cx="963.5" cy="694.2" r="8.2" fill="#ee5330"/>
<path d="M728.3 166.0 L737.3 193.8 L766.6 193.8 L742.9 210.9 L752.0 238.8 L728.3 221.6 L704.6 238.8 L713.7 210.9 L690.0 193.8 L719.3 193.8Z" fill="#fcc30f" stroke="#fcc30f" stroke-width="11.53" stroke-linejoin="round"/><path d="M728.3 168.6 L736.7 194.6 L764.1 194.6 L742.0 210.6 L750.4 236.6 L728.3 220.6 L706.2 236.6 L714.6 210.6 L692.5 194.6 L719.9 194.6Z" fill="none" stroke="#fff" stroke-width="9.58" stroke-linejoin="round"/><path d="M728.3 168.6 L736.7 194.6 L764.1 194.6 L742.0 210.6 L750.4 236.6 L728.3 220.6 L706.2 236.6 L714.6 210.6 L692.5 194.6 L719.9 194.6Z" fill="#fcc30f" stroke="#fcc30f" stroke-width="5.18" stroke-linejoin="round"/><path d="M728.3 173.2 L735.7 196.0 L759.7 196.0 L740.3 210.1 L747.7 232.9 L728.3 218.8 L708.9 232.9 L716.3 210.1 L696.9 196.0 L720.9 196.0Z" fill="#ee4136"/>
<path d="M660.0 194.6 L664.6 208.8 L679.5 208.8 L667.4 217.5 L672.0 231.7 L660.0 222.9 L648.0 231.7 L652.6 217.5 L640.5 208.8 L655.4 208.8Z" fill="#fcc30f" stroke="#fcc30f" stroke-width="8.23" stroke-linejoin="round"/><path d="M660.0 196.2 L664.2 209.3 L677.9 209.3 L666.9 217.3 L671.1 230.4 L660.0 222.3 L648.9 230.4 L653.1 217.3 L642.1 209.3 L655.8 209.3Z" fill="none" stroke="#fff" stroke-width="7.47" stroke-linejoin="round"/><path d="M660.0 196.2 L664.2 209.3 L677.9 209.3 L666.9 217.3 L671.1 230.4 L660.0 222.3 L648.9 230.4 L653.1 217.3 L642.1 209.3 L655.8 209.3Z" fill="#fcc30f" stroke="#fcc30f" stroke-width="3.07" stroke-linejoin="round"/><path d="M660.0 199.1 L663.6 210.2 L675.2 210.2 L665.8 217.0 L669.4 228.0 L660.0 221.2 L650.6 228.0 L654.2 217.0 L644.8 210.2 L656.4 210.2Z" fill="#ee4136"/>
<path d="M797.0 194.6 L801.6 208.8 L816.5 208.8 L804.4 217.5 L809.0 231.7 L797.0 222.9 L785.0 231.7 L789.6 217.5 L777.5 208.8 L792.4 208.8Z" fill="#fcc30f" stroke="#fcc30f" stroke-width="8.23" stroke-linejoin="round"/><path d="M797.0 196.2 L801.2 209.3 L814.9 209.3 L803.9 217.3 L808.1 230.4 L797.0 222.3 L785.9 230.4 L790.1 217.3 L779.1 209.3 L792.8 209.3Z" fill="none" stroke="#fff" stroke-width="7.47" stroke-linejoin="round"/><path d="M797.0 196.2 L801.2 209.3 L814.9 209.3 L803.9 217.3 L808.1 230.4 L797.0 222.3 L785.9 230.4 L790.1 217.3 L779.1 209.3 L792.8 209.3Z" fill="#fcc30f" stroke="#fcc30f" stroke-width="3.07" stroke-linejoin="round"/><path d="M797.0 199.1 L800.6 210.2 L812.2 210.2 L802.8 217.0 L806.4 228.0 L797.0 221.2 L787.6 228.0 L791.2 217.0 L781.8 210.2 L793.4 210.2Z" fill="#ee4136"/>
<path d="M730.0 718.3 L739.4 747.2 L769.8 747.2 L745.2 765.0 L754.6 793.9 L730.0 776.1 L705.4 793.9 L714.8 765.0 L690.2 747.2 L720.6 747.2Z" fill="#fcc30f" stroke="#fcc30f" stroke-width="11.82" stroke-linejoin="round"/><path d="M730.0 721.0 L738.8 748.0 L767.2 748.0 L744.2 764.7 L753.0 791.8 L730.0 775.1 L707.0 791.8 L715.8 764.7 L692.8 748.0 L721.2 748.0Z" fill="none" stroke="#fff" stroke-width="9.76" stroke-linejoin="round"/><path d="M730.0 721.0 L738.8 748.0 L767.2 748.0 L744.2 764.7 L753.0 791.8 L730.0 775.1 L707.0 791.8 L715.8 764.7 L692.8 748.0 L721.2 748.0Z" fill="#fcc30f" stroke="#fcc30f" stroke-width="5.36" stroke-linejoin="round"/><path d="M730.0 725.7 L737.7 749.5 L762.7 749.5 L742.5 764.2 L750.2 787.9 L730.0 773.2 L709.8 787.9 L717.5 764.2 L697.3 749.5 L722.3 749.5Z" fill="#ee4136"/>
<path d="M661.3 744.9 L666.4 760.6 L683.0 760.6 L669.6 770.4 L674.7 786.2 L661.3 776.4 L647.9 786.2 L653.0 770.4 L639.6 760.6 L656.2 760.6Z" fill="#fcc30f" stroke="#fcc30f" stroke-width="8.74" stroke-linejoin="round"/><path d="M661.3 746.5 L666.1 761.2 L681.4 761.2 L669.0 770.2 L673.7 784.8 L661.3 775.8 L648.9 784.8 L653.6 770.2 L641.2 761.2 L656.5 761.2Z" fill="none" stroke="#fff" stroke-width="7.79" stroke-linejoin="round"/><path d="M661.3 746.5 L666.1 761.2 L681.4 761.2 L669.0 770.2 L673.7 784.8 L661.3 775.8 L648.9 784.8 L653.6 770.2 L641.2 761.2 L656.5 761.2Z" fill="#fcc30f" stroke="#fcc30f" stroke-width="3.39" stroke-linejoin="round"/><path d="M661.3 749.5 L665.4 762.1 L678.6 762.1 L667.9 769.8 L672.0 782.4 L661.3 774.7 L650.6 782.4 L654.7 769.8 L644.0 762.1 L657.2 762.1Z" fill="#ee4136"/>
<path d="M798.8 744.9 L803.9 760.6 L820.5 760.6 L807.1 770.4 L812.2 786.2 L798.8 776.4 L785.4 786.2 L790.5 770.4 L777.1 760.6 L793.7 760.6Z" fill="#fcc30f" stroke="#fcc30f" stroke-width="8.74" stroke-linejoin="round"/><path d="M798.8 746.5 L803.6 761.2 L818.9 761.2 L806.5 770.2 L811.2 784.8 L798.8 775.8 L786.4 784.8 L791.1 770.2 L778.7 761.2 L794.0 761.2Z" fill="none" stroke="#fff" stroke-width="7.79" stroke-linejoin="round"/><path d="M798.8 746.5 L803.6 761.2 L818.9 761.2 L806.5 770.2 L811.2 784.8 L798.8 775.8 L786.4 784.8 L791.1 770.2 L778.7 761.2 L794.0 761.2Z" fill="#fcc30f" stroke="#fcc30f" stroke-width="3.39" stroke-linejoin="round"/><path d="M798.8 749.5 L802.9 762.1 L816.1 762.1 L805.4 769.8 L809.5 782.4 L798.8 774.7 L788.1 782.4 L792.2 769.8 L781.5 762.1 L794.7 762.1Z" fill="#ee4136"/>
<rect x="399.3" y="381" width="655.8" height="199" rx="46" fill="#8f1a1c"/>
<rect x="401.8" y="383.3" width="650.8" height="194.4" rx="44" fill="#ed1c24"/>
<rect x="408.5" y="389.6" width="637.4" height="181.8" rx="38" fill="none" stroke="#fed20a" stroke-width="4"/>
<rect x="415.3" y="396.3" width="624" height="168.4" rx="32" fill="#8f1a1c"/>
<rect x="417.8" y="398.8" width="619" height="163.4" rx="30" fill="#022641"/>
<rect x="492" y="419.4" width="474" height="2.2" fill="#0fa6df"/>
<rect x="492" y="439.5" width="474" height="2.2" fill="#0fa6df"/>
<rect x="492" y="459.6" width="474" height="2.2" fill="#0fa6df"/>
<rect x="492" y="479.7" width="474" height="2.2" fill="#0fa6df"/>
<rect x="492" y="499.8" width="474" height="2.2" fill="#0fa6df"/>
<rect x="492" y="519.9" width="474" height="2.2" fill="#0fa6df"/>
<rect x="492" y="540.0" width="474" height="2.2" fill="#0fa6df"/>
<rect x="431" y="415.0" width="58" height="11" rx="5.5" fill="#0fadea"/>
<rect x="435" y="419.0" width="50" height="3" rx="1.5" fill="#fff"/>
<rect x="969" y="415.0" width="58" height="11" rx="5.5" fill="#0fadea"/>
<rect x="973" y="419.0" width="50" height="3" rx="1.5" fill="#fff"/>
<rect x="431" y="435.1" width="58" height="11" rx="5.5" fill="#0fadea"/>
<rect x="435" y="439.1" width="50" height="3" rx="1.5" fill="#fff"/>
<rect x="969" y="435.1" width="58" height="11" rx="5.5" fill="#0fadea"/>
<rect x="973" y="439.1" width="50" height="3" rx="1.5" fill="#fff"/>
<rect x="431" y="455.2" width="58" height="11" rx="5.5" fill="#0fadea"/>
<rect x="435" y="459.2" width="50" height="3" rx="1.5" fill="#fff"/>
<rect x="969" y="455.2" width="58" height="11" rx="5.5" fill="#0fadea"/>
<rect x="973" y="459.2" width="50" height="3" rx="1.5" fill="#fff"/>
<rect x="431" y="475.3" width="58" height="11" rx="5.5" fill="#0fadea"/>
<rect x="435" y="479.3" width="50" height="3" rx="1.5" fill="#fff"/>
<rect x="969" y="475.3" width="58" height="11" rx="5.5" fill="#0fadea"/>
<rect x="973" y="479.3" width="50" height="3" rx="1.5" fill="#fff"/>
<rect x="431" y="495.4" width="58" height="11" rx="5.5" fill="#0fadea"/>
<rect x="435" y="499.4" width="50" height="3" rx="1.5" fill="#fff"/>
<rect x="969" y="495.4" width="58" height="11" rx="5.5" fill="#0fadea"/>
<rect x="973" y="499.4" width="50" height="3" rx="1.5" fill="#fff"/>
<rect x="431" y="515.5" width="58" height="11" rx="5.5" fill="#0fadea"/>
<rect x="435" y="519.5" width="50" height="3" rx="1.5" fill="#fff"/>
<rect x="969" y="515.5" width="58" height="11" rx="5.5" fill="#0fadea"/>
<rect x="973" y="519.5" width="50" height="3" rx="1.5" fill="#fff"/>
<rect x="431" y="535.6" width="58" height="11" rx="5.5" fill="#0fadea"/>
<rect x="435" y="539.6" width="50" height="3" rx="1.5" fill="#fff"/>
<rect x="969" y="535.6" width="58" height="11" rx="5.5" fill="#0fadea"/>
<rect x="973" y="539.6" width="50" height="3" rx="1.5" fill="#fff"/>
<circle cx="475.4" cy="390.9" r="11.4" fill="#7c1416"/><circle cx="477.0" cy="388.5" r="11.4" fill="#f7941d"/><circle cx="477.0" cy="388.5" r="7.9" fill="#faeab4"/>
<circle cx="475.4" cy="573.2" r="11.4" fill="#7c1416"/><circle cx="477.0" cy="570.8" r="11.4" fill="#f7941d"/><circle cx="477.0" cy="570.8" r="7.9" fill="#faeab4"/>
<circle cx="511.7" cy="390.9" r="11.4" fill="#7c1416"/><circle cx="513.3" cy="388.5" r="11.4" fill="#f7941d"/><circle cx="513.3" cy="388.5" r="7.9" fill="#faeab4"/>
<circle cx="511.7" cy="573.2" r="11.4" fill="#7c1416"/><circle cx="513.3" cy="570.8" r="11.4" fill="#f7941d"/><circle cx="513.3" cy="570.8" r="7.9" fill="#faeab4"/>
<circle cx="547.6" cy="390.9" r="11.4" fill="#7c1416"/><circle cx="549.2" cy="388.5" r="11.4" fill="#f7941d"/><circle cx="549.2" cy="388.5" r="7.9" fill="#faeab4"/>
<circle cx="547.6" cy="573.2" r="11.4" fill="#7c1416"/><circle cx="549.2" cy="570.8" r="11.4" fill="#f7941d"/><circle cx="549.2" cy="570.8" r="7.9" fill="#faeab4"/>
<circle cx="583.5" cy="390.9" r="11.4" fill="#7c1416"/><circle cx="585.1" cy="388.5" r="11.4" fill="#f7941d"/><circle cx="585.1" cy="388.5" r="7.9" fill="#faeab4"/>
<circle cx="583.5" cy="573.2" r="11.4" fill="#7c1416"/><circle cx="585.1" cy="570.8" r="11.4" fill="#f7941d"/><circle cx="585.1" cy="570.8" r="7.9" fill="#faeab4"/>
<circle cx="619.4" cy="390.9" r="11.4" fill="#7c1416"/><circle cx="621.0" cy="388.5" r="11.4" fill="#f7941d"/><circle cx="621.0" cy="388.5" r="7.9" fill="#faeab4"/>
<circle cx="619.4" cy="573.2" r="11.4" fill="#7c1416"/><circle cx="621.0" cy="570.8" r="11.4" fill="#f7941d"/><circle cx="621.0" cy="570.8" r="7.9" fill="#faeab4"/>
<circle cx="655.3" cy="390.9" r="11.4" fill="#7c1416"/><circle cx="656.9" cy="388.5" r="11.4" fill="#f7941d"/><circle cx="656.9" cy="388.5" r="7.9" fill="#faeab4"/>
<circle cx="655.3" cy="573.2" r="11.4" fill="#7c1416"/><circle cx="656.9" cy="570.8" r="11.4" fill="#f7941d"/><circle cx="656.9" cy="570.8" r="7.9" fill="#faeab4"/>
<circle cx="691.2" cy="390.9" r="11.4" fill="#7c1416"/><circle cx="692.8" cy="388.5" r="11.4" fill="#f7941d"/><circle cx="692.8" cy="388.5" r="7.9" fill="#faeab4"/>
<circle cx="691.2" cy="573.2" r="11.4" fill="#7c1416"/><circle cx="692.8" cy="570.8" r="11.4" fill="#f7941d"/><circle cx="692.8" cy="570.8" r="7.9" fill="#faeab4"/>
<circle cx="727.1" cy="390.9" r="11.4" fill="#7c1416"/><circle cx="728.7" cy="388.5" r="11.4" fill="#f7941d"/><circle cx="728.7" cy="388.5" r="7.9" fill="#faeab4"/>
<circle cx="727.1" cy="573.2" r="11.4" fill="#7c1416"/><circle cx="728.7" cy="570.8" r="11.4" fill="#f7941d"/><circle cx="728.7" cy="570.8" r="7.9" fill="#faeab4"/>
<circle cx="763.0" cy="390.9" r="11.4" fill="#7c1416"/><circle cx="764.6" cy="388.5" r="11.4" fill="#f7941d"/><circle cx="764.6" cy="388.5" r="7.9" fill="#faeab4"/>
<circle cx="763.0" cy="573.2" r="11.4" fill="#7c1416"/><circle cx="764.6" cy="570.8" r="11.4" fill="#f7941d"/><circle cx="764.6" cy="570.8" r="7.9" fill="#faeab4"/>
<circle cx="798.9" cy="390.9" r="11.4" fill="#7c1416"/><circle cx="800.5" cy="388.5" r="11.4" fill="#f7941d"/><circle cx="800.5" cy="388.5" r="7.9" fill="#faeab4"/>
<circle cx="798.9" cy="573.2" r="11.4" fill="#7c1416"/><circle cx="800.5" cy="570.8" r="11.4" fill="#f7941d"/><circle cx="800.5" cy="570.8" r="7.9" fill="#faeab4"/>
<circle cx="834.8" cy="390.9" r="11.4" fill="#7c1416"/><circle cx="836.4" cy="388.5" r="11.4" fill="#f7941d"/><circle cx="836.4" cy="388.5" r="7.9" fill="#faeab4"/>
<circle cx="834.8" cy="573.2" r="11.4" fill="#7c1416"/><circle cx="836.4" cy="570.8" r="11.4" fill="#f7941d"/><circle cx="836.4" cy="570.8" r="7.9" fill="#faeab4"/>
<circle cx="870.7" cy="390.9" r="11.4" fill="#7c1416"/><circle cx="872.3" cy="388.5" r="11.4" fill="#f7941d"/><circle cx="872.3" cy="388.5" r="7.9" fill="#faeab4"/>
<circle cx="870.7" cy="573.2" r="11.4" fill="#7c1416"/><circle cx="872.3" cy="570.8" r="11.4" fill="#f7941d"/><circle cx="872.3" cy="570.8" r="7.9" fill="#faeab4"/>
<circle cx="906.6" cy="390.9" r="11.4" fill="#7c1416"/><circle cx="908.2" cy="388.5" r="11.4" fill="#f7941d"/><circle cx="908.2" cy="388.5" r="7.9" fill="#faeab4"/>
<circle cx="906.6" cy="573.2" r="11.4" fill="#7c1416"/><circle cx="908.2" cy="570.8" r="11.4" fill="#f7941d"/><circle cx="908.2" cy="570.8" r="7.9" fill="#faeab4"/>
<circle cx="942.5" cy="390.9" r="11.4" fill="#7c1416"/><circle cx="944.1" cy="388.5" r="11.4" fill="#f7941d"/><circle cx="944.1" cy="388.5" r="7.9" fill="#faeab4"/>
<circle cx="942.5" cy="573.2" r="11.4" fill="#7c1416"/><circle cx="944.1" cy="570.8" r="11.4" fill="#f7941d"/><circle cx="944.1" cy="570.8" r="7.9" fill="#faeab4"/>
<circle cx="975.7" cy="390.9" r="11.4" fill="#7c1416"/><circle cx="977.3" cy="388.5" r="11.4" fill="#f7941d"/><circle cx="977.3" cy="388.5" r="7.9" fill="#faeab4"/>
<circle cx="975.7" cy="573.2" r="11.4" fill="#7c1416"/><circle cx="977.3" cy="570.8" r="11.4" fill="#f7941d"/><circle cx="977.3" cy="570.8" r="7.9" fill="#faeab4"/>
<circle cx="406.9" cy="443.9" r="11.4" fill="#7c1416"/><circle cx="408.5" cy="441.5" r="11.4" fill="#f7941d"/><circle cx="408.5" cy="441.5" r="7.9" fill="#faeab4"/>
<circle cx="1045.4" cy="444.9" r="11.4" fill="#7c1416"/><circle cx="1047.0" cy="442.5" r="11.4" fill="#f7941d"/><circle cx="1047.0" cy="442.5" r="7.9" fill="#faeab4"/>
<circle cx="406.9" cy="483.9" r="11.4" fill="#7c1416"/><circle cx="408.5" cy="481.5" r="11.4" fill="#f7941d"/><circle cx="408.5" cy="481.5" r="7.9" fill="#faeab4"/>
<circle cx="1045.4" cy="484.9" r="11.4" fill="#7c1416"/><circle cx="1047.0" cy="482.5" r="11.4" fill="#f7941d"/><circle cx="1047.0" cy="482.5" r="7.9" fill="#faeab4"/>
<circle cx="406.9" cy="519.9" r="11.4" fill="#7c1416"/><circle cx="408.5" cy="517.5" r="11.4" fill="#f7941d"/><circle cx="408.5" cy="517.5" r="7.9" fill="#faeab4"/>
<circle cx="1045.4" cy="520.9" r="11.4" fill="#7c1416"/><circle cx="1047.0" cy="518.5" r="11.4" fill="#f7941d"/><circle cx="1047.0" cy="518.5" r="7.9" fill="#faeab4"/>
<g transform="scale(0.7600 1)" fill="none" stroke-linejoin="round" stroke-linecap="round">
<path d="M 666.6 436.7 H 685.5 C 711.8 436.7 726.4 456.0 726.4 480.0 C 726.4 504.0 711.8 523.4 685.5 523.4 H 666.6 Z" stroke="#0a0a0a" stroke-width="25" transform="translate(-6.58 5)"/>
<path d="M 755.0 522.7 L 775.0 441.7 C 777.6 437.0 792.1 437.0 795.9 443.9 L 815.8 526.3 M 764.5 500.3 H 805.4" stroke="#0a0a0a" stroke-width="25" transform="translate(-6.58 5)"/>
<path d="M 847.9 436.7 H 866.8 C 893.2 436.7 907.8 456.0 907.8 480.0 C 907.8 504.0 893.2 523.4 866.8 523.4 H 847.9 Z" stroke="#0a0a0a" stroke-width="25" transform="translate(-6.58 5)"/>
<path d="M 987.1 436.0 V 506.0 C 987.1 518.0 978.9 522.5 967.1 522.5 H 964.5" stroke="#0a0a0a" stroke-width="25" transform="translate(-6.58 5)"/>
<path d="M 1058.4 435.5 C 1039.5 435.5 1024.7 455.0 1024.7 480.0 C 1024.7 505.0 1039.5 524.8 1058.4 524.8 C 1077.4 524.8 1092.1 505.0 1092.1 480.0 C 1092.1 455.0 1077.4 435.5 1058.4 435.5 Z" stroke="#0a0a0a" stroke-width="25" transform="translate(-6.58 5)"/>
<path d="M 1129.6 437.0 V 522.0 M 1177.6 442.0 L 1139.5 480.0 L 1177.6 522.5" stroke="#0a0a0a" stroke-width="25" transform="translate(-6.58 5)"/>
<path d="M 1254.7 438.2 H 1215.1 V 522.8 H 1254.7 M 1215.1 480.0 H 1246.1" stroke="#0a0a0a" stroke-width="25" transform="translate(-6.58 5)"/>
<path d="M 666.6 436.7 H 685.5 C 711.8 436.7 726.4 456.0 726.4 480.0 C 726.4 504.0 711.8 523.4 685.5 523.4 H 666.6 Z" stroke="#5cb947" stroke-width="25"/>
<path d="M 755.0 522.7 L 775.0 441.7 C 777.6 437.0 792.1 437.0 795.9 443.9 L 815.8 526.3 M 764.5 500.3 H 805.4" stroke="#5cb947" stroke-width="25"/>
<path d="M 847.9 436.7 H 866.8 C 893.2 436.7 907.8 456.0 907.8 480.0 C 907.8 504.0 893.2 523.4 866.8 523.4 H 847.9 Z" stroke="#5cb947" stroke-width="25"/>
<path d="M 987.1 436.0 V 506.0 C 987.1 518.0 978.9 522.5 967.1 522.5 H 964.5" stroke="#5cb947" stroke-width="25"/>
<path d="M 1058.4 435.5 C 1039.5 435.5 1024.7 455.0 1024.7 480.0 C 1024.7 505.0 1039.5 524.8 1058.4 524.8 C 1077.4 524.8 1092.1 505.0 1092.1 480.0 C 1092.1 455.0 1077.4 435.5 1058.4 435.5 Z" stroke="#5cb947" stroke-width="25"/>
<path d="M 1129.6 437.0 V 522.0 M 1177.6 442.0 L 1139.5 480.0 L 1177.6 522.5" stroke="#5cb947" stroke-width="25"/>
<path d="M 1254.7 438.2 H 1215.1 V 522.8 H 1254.7 M 1215.1 480.0 H 1246.1" stroke="#5cb947" stroke-width="25"/>
<path d="M 666.6 436.7 H 685.5 C 711.8 436.7 726.4 456.0 726.4 480.0 C 726.4 504.0 711.8 523.4 685.5 523.4 H 666.6 Z" stroke="#bed630" stroke-width="20.6"/>
<path d="M 755.0 522.7 L 775.0 441.7 C 777.6 437.0 792.1 437.0 795.9 443.9 L 815.8 526.3 M 764.5 500.3 H 805.4" stroke="#bed630" stroke-width="20.6"/>
<path d="M 847.9 436.7 H 866.8 C 893.2 436.7 907.8 456.0 907.8 480.0 C 907.8 504.0 893.2 523.4 866.8 523.4 H 847.9 Z" stroke="#bed630" stroke-width="20.6"/>
<path d="M 987.1 436.0 V 506.0 C 987.1 518.0 978.9 522.5 967.1 522.5 H 964.5" stroke="#bed630" stroke-width="20.6"/>
<path d="M 1058.4 435.5 C 1039.5 435.5 1024.7 455.0 1024.7 480.0 C 1024.7 505.0 1039.5 524.8 1058.4 524.8 C 1077.4 524.8 1092.1 505.0 1092.1 480.0 C 1092.1 455.0 1077.4 435.5 1058.4 435.5 Z" stroke="#bed630" stroke-width="20.6"/>
<path d="M 1129.6 437.0 V 522.0 M 1177.6 442.0 L 1139.5 480.0 L 1177.6 522.5" stroke="#bed630" stroke-width="20.6"/>
<path d="M 1254.7 438.2 H 1215.1 V 522.8 H 1254.7 M 1215.1 480.0 H 1246.1" stroke="#bed630" stroke-width="20.6"/>
</g>
<g fill="none" stroke="#fff" stroke-width="2.6" stroke-linejoin="round" stroke-linecap="butt">
<path d="M506.6 436.7 H521 C541 436.7 552.1 456 552.1 480 C552.1 504 541 523.4 521 523.4 H506.6 Z"/>
<path d="M573.8 522.7 L589 441.7 C591 437 602 437 604.9 443.9 L620 526.3 M581 500.3 H612.1"/>
<path d="M 644.4 436.7 H 658.8 C 678.8 436.7 689.9 456.0 689.9 480.0 C 689.9 504.0 678.8 523.4 658.8 523.4 H 644.4 Z"/>
<path d="M750.2 443 V506 C750.2 518 744 522.5 735 522.5 H733"/>
<path d="M804.4 435.5 C790 435.5 778.8 455 778.8 480 C778.8 505 790 524.8 804.4 524.8 C818.8 524.8 830 505 830 480 C830 455 818.8 435.5 804.4 435.5 Z"/>
<path d="M859.4 438.5 V521.3 M894.8 443.2 L871.5 479.3 L894.8 522.5"/>
<path d="M954.3 437.8 H924.5 V521.3 H954.3 M924.5 480 H947.3"/>
</g>
<g font-family="Liberation Sans" font-weight="bold" text-anchor="middle" stroke-linejoin="round" font-size="65">
<text transform="translate(570.5 345.1) rotate(-38.8) scale(0.90 1)" x="-1.6" y="24.2" fill="#1b1f5c" stroke="#1b1f5c" stroke-width="11.2">C</text><text transform="translate(607.3 322.0) rotate(-29.0) scale(0.90 1)" x="-1.6" y="24.2" fill="#1b1f5c" stroke="#1b1f5c" stroke-width="11.2">E</text><text transform="translate(644.0 304.5) rotate(-20.1) scale(0.90 1)" x="-1.6" y="24.2" fill="#1b1f5c" stroke="#1b1f5c" stroke-width="11.2">L</text><text transform="translate(689.1 294.5) rotate(-9.5) scale(0.90 1)" x="-1.6" y="24.2" fill="#1b1f5c" stroke="#1b1f5c" stroke-width="11.2">E</text><text transform="translate(735.0 292.5) rotate(0.9) scale(0.90 1)" x="-1.6" y="24.2" fill="#1b1f5c" stroke="#1b1f5c" stroke-width="11.2">B</text><text transform="translate(786.0 299.0) rotate(11.5) scale(0.90 1)" x="-1.6" y="24.2" fill="#1b1f5c" stroke="#1b1f5c" stroke-width="11.2">R</text><text transform="translate(817.0 307.5) rotate(20.2) scale(0.90 1)" x="-1.6" y="24.2" fill="#1b1f5c" stroke="#1b1f5c" stroke-width="11.2">I</text><text transform="translate(853.0 321.0) rotate(29.0) scale(0.90 1)" x="-1.6" y="24.2" fill="#1b1f5c" stroke="#1b1f5c" stroke-width="11.2">T</text><text transform="translate(892.5 350.0) rotate(39.1) scale(0.90 1)" x="-1.6" y="24.2" fill="#1b1f5c" stroke="#1b1f5c" stroke-width="11.2">Y</text><text transform="translate(570.5 345.1) rotate(-38.8) scale(0.90 1)" x="0" y="22.4" fill="#10aeea" stroke="#10aeea" stroke-width="11.2">C</text><text transform="translate(607.3 322.0) rotate(-29.0) scale(0.90 1)" x="0" y="22.4" fill="#10aeea" stroke="#10aeea" stroke-width="11.2">E</text><text transform="translate(644.0 304.5) rotate(-20.1) scale(0.90 1)" x="0" y="22.4" fill="#10aeea" stroke="#10aeea" stroke-width="11.2">L</text><text transform="translate(689.1 294.5) rotate(-9.5) scale(0.90 1)" x="0" y="22.4" fill="#10aeea" stroke="#10aeea" stroke-width="11.2">E</text><text transform="translate(735.0 292.5) rotate(0.9) scale(0.90 1)" x="0" y="22.4" fill="#10aeea" stroke="#10aeea" stroke-width="11.2">B</text><text transform="translate(786.0 299.0) rotate(11.5) scale(0.90 1)" x="0" y="22.4" fill="#10aeea" stroke="#10aeea" stroke-width="11.2">R</text><text transform="translate(817.0 307.5) rotate(20.2) scale(0.90 1)" x="0" y="22.4" fill="#10aeea" stroke="#10aeea" stroke-width="11.2">I</text><text transform="translate(853.0 321.0) rotate(29.0) scale(0.90 1)" x="0" y="22.4" fill="#10aeea" stroke="#10aeea" stroke-width="11.2">T</text><text transform="translate(892.5 350.0) rotate(39.1) scale(0.90 1)" x="0" y="22.4" fill="#10aeea" stroke="#10aeea" stroke-width="11.2">Y</text><text transform="translate(570.5 345.1) rotate(-38.8) scale(0.90 1)" x="0" y="22.4" fill="#f4f7f9" stroke="#f4f7f9" stroke-width="1.2">C</text><text transform="translate(607.3 322.0) rotate(-29.0) scale(0.90 1)" x="0" y="22.4" fill="#f4f7f9" stroke="#f4f7f9" stroke-width="1.2">E</text><text transform="translate(644.0 304.5) rotate(-20.1) scale(0.90 1)" x="0" y="22.4" fill="#f4f7f9" stroke="#f4f7f9" stroke-width="1.2">L</text><text transform="translate(689.1 294.5) rotate(-9.5) scale(0.90 1)" x="0" y="22.4" fill="#f4f7f9" stroke="#f4f7f9" stroke-width="1.2">E</text><text transform="translate(735.0 292.5) rotate(0.9) scale(0.90 1)" x="0" y="22.4" fill="#f4f7f9" stroke="#f4f7f9" stroke-width="1.2">B</text><text transform="translate(786.0 299.0) rotate(11.5) scale(0.90 1)" x="0" y="22.4" fill="#f4f7f9" stroke="#f4f7f9" stroke-width="1.2">R</text><text transform="translate(817.0 307.5) rotate(20.2) scale(0.90 1)" x="0" y="22.4" fill="#f4f7f9" stroke="#f4f7f9" stroke-width="1.2">I</text><text transform="translate(853.0 321.0) rotate(29.0) scale(0.90 1)" x="0" y="22.4" fill="#f4f7f9" stroke="#f4f7f9" stroke-width="1.2">T</text><text transform="translate(892.5 350.0) rotate(39.1) scale(0.90 1)" x="0" y="22.4" fill="#f4f7f9" stroke="#f4f7f9" stroke-width="1.2">Y</text>
</g>
<g clip-path="url(#topclip)"><path d="M600.0 392.0 C600.5 390.0 602.1 383.0 603.0 380.0 C603.9 377.0 604.7 375.4 605.5 374.0 C606.3 372.6 606.7 372.0 607.8 371.8 C608.9 371.6 610.6 372.0 612.0 373.0 C613.4 374.0 614.8 374.8 616.0 378.0 C617.2 381.2 617.0 389.7 619.0 392.0 C621.0 394.3 626.7 395.3 628.0 392.0 C629.3 388.7 628.5 377.7 627.0 372.0 C625.5 366.3 621.8 361.9 619.0 358.0 C616.2 354.1 609.7 349.2 610.2 348.5 C610.7 347.8 618.2 351.4 622.0 354.0 C625.8 356.6 629.8 360.5 633.0 364.0 C636.2 367.5 639.2 372.2 641.0 375.0 C642.8 377.8 643.0 381.5 644.0 381.0 C645.0 380.5 646.2 375.2 647.0 372.0 C647.8 368.8 647.8 364.8 648.5 362.0 C649.2 359.2 649.6 356.0 651.0 355.5 C652.4 355.0 655.0 356.9 656.8 359.0 C658.5 361.1 660.3 364.8 661.5 368.3 C662.7 371.8 663.2 376.1 663.8 380.0 C664.4 383.9 662.3 390.0 665.0 392.0 C667.7 394.0 676.9 396.3 680.0 392.0 C683.1 387.7 683.2 373.0 683.5 366.0 C683.8 359.0 683.2 354.8 682.0 350.0 C680.8 345.2 678.7 341.0 676.0 337.0 C673.3 333.0 669.6 328.7 666.0 326.0 C662.4 323.3 653.7 321.7 654.5 321.0 C655.3 320.3 665.3 320.0 670.8 321.7 C676.2 323.4 682.5 326.5 687.2 331.0 C691.9 335.5 695.5 342.9 698.8 348.5 C702.1 354.1 704.5 360.5 707.0 364.8 C709.5 369.1 713.4 375.9 714.0 374.5 C714.6 373.1 711.0 361.6 710.5 356.7 C710.0 351.8 710.4 347.8 711.0 345.0 C711.6 342.2 712.3 340.0 714.0 339.8 C715.7 339.6 718.9 341.0 721.0 343.8 C723.1 346.6 725.3 352.6 726.9 356.7 C728.5 360.8 729.1 365.1 730.4 368.3 C731.7 371.5 733.1 376.0 734.5 376.0 C735.9 376.0 737.3 371.5 738.6 368.3 C739.9 365.1 740.5 360.8 742.1 356.7 C743.7 352.6 745.9 346.6 748.0 343.8 C750.1 341.0 753.3 339.6 755.0 339.8 C756.7 340.0 757.4 342.2 758.0 345.0 C758.6 347.8 759.0 351.8 758.5 356.7 C758.0 361.6 754.4 373.1 755.0 374.5 C755.6 375.9 759.5 369.1 762.0 364.8 C764.5 360.5 766.9 354.1 770.2 348.5 C773.5 342.9 777.1 335.5 781.8 331.0 C786.5 326.5 792.8 323.4 798.2 321.7 C803.7 320.0 813.7 320.3 814.5 321.0 C815.3 321.7 806.6 323.3 803.0 326.0 C799.4 328.7 795.7 333.0 793.0 337.0 C790.3 341.0 788.2 345.2 787.0 350.0 C785.8 354.8 785.2 359.0 785.5 366.0 C785.8 373.0 785.9 387.7 789.0 392.0 C792.1 396.3 801.3 394.0 804.0 392.0 C806.7 390.0 804.6 383.9 805.2 380.0 C805.8 376.1 806.3 371.8 807.5 368.3 C808.7 364.8 810.5 361.1 812.2 359.0 C814.0 356.9 816.6 355.0 818.0 355.5 C819.4 356.0 819.8 359.2 820.5 362.0 C821.2 364.8 821.2 368.8 822.0 372.0 C822.8 375.2 824.0 380.5 825.0 381.0 C826.0 381.5 826.2 377.8 828.0 375.0 C829.8 372.2 832.8 367.5 836.0 364.0 C839.2 360.5 843.2 356.6 847.0 354.0 C850.8 351.4 858.3 347.8 858.8 348.5 C859.3 349.2 852.8 354.1 850.0 358.0 C847.2 361.9 843.5 366.3 842.0 372.0 C840.5 377.7 839.7 388.7 841.0 392.0 C842.3 395.3 848.0 394.3 850.0 392.0 C852.0 389.7 851.8 381.2 853.0 378.0 C854.2 374.8 855.6 374.0 857.0 373.0 C858.4 372.0 860.1 371.6 861.2 371.8 C862.3 372.0 862.7 372.6 863.5 374.0 C864.3 375.4 865.1 377.0 866.0 380.0 C866.9 383.0 868.5 390.0 869.0 392.0" fill="#952323" stroke="#fcc410" stroke-width="7.5" stroke-linejoin="round"/><path d="M600.0 392.0 C600.5 390.0 602.1 383.0 603.0 380.0 C603.9 377.0 604.7 375.4 605.5 374.0 C606.3 372.6 606.7 372.0 607.8 371.8 C608.9 371.6 610.6 372.0 612.0 373.0 C613.4 374.0 614.8 374.8 616.0 378.0 C617.2 381.2 617.0 389.7 619.0 392.0 C621.0 394.3 626.7 395.3 628.0 392.0 C629.3 388.7 628.5 377.7 627.0 372.0 C625.5 366.3 621.8 361.9 619.0 358.0 C616.2 354.1 609.7 349.2 610.2 348.5 C610.7 347.8 618.2 351.4 622.0 354.0 C625.8 356.6 629.8 360.5 633.0 364.0 C636.2 367.5 639.2 372.2 641.0 375.0 C642.8 377.8 643.0 381.5 644.0 381.0 C645.0 380.5 646.2 375.2 647.0 372.0 C647.8 368.8 647.8 364.8 648.5 362.0 C649.2 359.2 649.6 356.0 651.0 355.5 C652.4 355.0 655.0 356.9 656.8 359.0 C658.5 361.1 660.3 364.8 661.5 368.3 C662.7 371.8 663.2 376.1 663.8 380.0 C664.4 383.9 662.3 390.0 665.0 392.0 C667.7 394.0 676.9 396.3 680.0 392.0 C683.1 387.7 683.2 373.0 683.5 366.0 C683.8 359.0 683.2 354.8 682.0 350.0 C680.8 345.2 678.7 341.0 676.0 337.0 C673.3 333.0 669.6 328.7 666.0 326.0 C662.4 323.3 653.7 321.7 654.5 321.0 C655.3 320.3 665.3 320.0 670.8 321.7 C676.2 323.4 682.5 326.5 687.2 331.0 C691.9 335.5 695.5 342.9 698.8 348.5 C702.1 354.1 704.5 360.5 707.0 364.8 C709.5 369.1 713.4 375.9 714.0 374.5 C714.6 373.1 711.0 361.6 710.5 356.7 C710.0 351.8 710.4 347.8 711.0 345.0 C711.6 342.2 712.3 340.0 714.0 339.8 C715.7 339.6 718.9 341.0 721.0 343.8 C723.1 346.6 725.3 352.6 726.9 356.7 C728.5 360.8 729.1 365.1 730.4 368.3 C731.7 371.5 733.1 376.0 734.5 376.0 C735.9 376.0 737.3 371.5 738.6 368.3 C739.9 365.1 740.5 360.8 742.1 356.7 C743.7 352.6 745.9 346.6 748.0 343.8 C750.1 341.0 753.3 339.6 755.0 339.8 C756.7 340.0 757.4 342.2 758.0 345.0 C758.6 347.8 759.0 351.8 758.5 356.7 C758.0 361.6 754.4 373.1 755.0 374.5 C755.6 375.9 759.5 369.1 762.0 364.8 C764.5 360.5 766.9 354.1 770.2 348.5 C773.5 342.9 777.1 335.5 781.8 331.0 C786.5 326.5 792.8 323.4 798.2 321.7 C803.7 320.0 813.7 320.3 814.5 321.0 C815.3 321.7 806.6 323.3 803.0 326.0 C799.4 328.7 795.7 333.0 793.0 337.0 C790.3 341.0 788.2 345.2 787.0 350.0 C785.8 354.8 785.2 359.0 785.5 366.0 C785.8 373.0 785.9 387.7 789.0 392.0 C792.1 396.3 801.3 394.0 804.0 392.0 C806.7 390.0 804.6 383.9 805.2 380.0 C805.8 376.1 806.3 371.8 807.5 368.3 C808.7 364.8 810.5 361.1 812.2 359.0 C814.0 356.9 816.6 355.0 818.0 355.5 C819.4 356.0 819.8 359.2 820.5 362.0 C821.2 364.8 821.2 368.8 822.0 372.0 C822.8 375.2 824.0 380.5 825.0 381.0 C826.0 381.5 826.2 377.8 828.0 375.0 C829.8 372.2 832.8 367.5 836.0 364.0 C839.2 360.5 843.2 356.6 847.0 354.0 C850.8 351.4 858.3 347.8 858.8 348.5 C859.3 349.2 852.8 354.1 850.0 358.0 C847.2 361.9 843.5 366.3 842.0 372.0 C840.5 377.7 839.7 388.7 841.0 392.0 C842.3 395.3 848.0 394.3 850.0 392.0 C852.0 389.7 851.8 381.2 853.0 378.0 C854.2 374.8 855.6 374.0 857.0 373.0 C858.4 372.0 860.1 371.6 861.2 371.8 C862.3 372.0 862.7 372.6 863.5 374.0 C864.3 375.4 865.1 377.0 866.0 380.0 C866.9 383.0 868.5 390.0 869.0 392.0" fill="none" stroke="#fff" stroke-width="2"/></g>
<circle cx="475.4" cy="390.9" r="11.4" fill="#7c1416"/><circle cx="477.0" cy="388.5" r="11.4" fill="#f7941d"/><circle cx="477.0" cy="388.5" r="7.9" fill="#faeab4"/>
<circle cx="511.7" cy="390.9" r="11.4" fill="#7c1416"/><circle cx="513.3" cy="388.5" r="11.4" fill="#f7941d"/><circle cx="513.3" cy="388.5" r="7.9" fill="#faeab4"/>
<circle cx="547.6" cy="390.9" r="11.4" fill="#7c1416"/><circle cx="549.2" cy="388.5" r="11.4" fill="#f7941d"/><circle cx="549.2" cy="388.5" r="7.9" fill="#faeab4"/>
<circle cx="583.5" cy="390.9" r="11.4" fill="#7c1416"/><circle cx="585.1" cy="388.5" r="11.4" fill="#f7941d"/><circle cx="585.1" cy="388.5" r="7.9" fill="#faeab4"/>
<circle cx="619.4" cy="390.9" r="11.4" fill="#7c1416"/><circle cx="621.0" cy="388.5" r="11.4" fill="#f7941d"/><circle cx="621.0" cy="388.5" r="7.9" fill="#faeab4"/>
<circle cx="655.3" cy="390.9" r="11.4" fill="#7c1416"/><circle cx="656.9" cy="388.5" r="11.4" fill="#f7941d"/><circle cx="656.9" cy="388.5" r="7.9" fill="#faeab4"/>
<circle cx="691.2" cy="390.9" r="11.4" fill="#7c1416"/><circle cx="692.8" cy="388.5" r="11.4" fill="#f7941d"/><circle cx="692.8" cy="388.5" r="7.9" fill="#faeab4"/>
<circle cx="727.1" cy="390.9" r="11.4" fill="#7c1416"/><circle cx="728.7" cy="388.5" r="11.4" fill="#f7941d"/><circle cx="728.7" cy="388.5" r="7.9" fill="#faeab4"/>
<circle cx="763.0" cy="390.9" r="11.4" fill="#7c1416"/><circle cx="764.6" cy="388.5" r="11.4" fill="#f7941d"/><circle cx="764.6" cy="388.5" r="7.9" fill="#faeab4"/>
<circle cx="798.9" cy="390.9" r="11.4" fill="#7c1416"/><circle cx="800.5" cy="388.5" r="11.4" fill="#f7941d"/><circle cx="800.5" cy="388.5" r="7.9" fill="#faeab4"/>
<circle cx="834.8" cy="390.9" r="11.4" fill="#7c1416"/><circle cx="836.4" cy="388.5" r="11.4" fill="#f7941d"/><circle cx="836.4" cy="388.5" r="7.9" fill="#faeab4"/>
<circle cx="870.7" cy="390.9" r="11.4" fill="#7c1416"/><circle cx="872.3" cy="388.5" r="11.4" fill="#f7941d"/><circle cx="872.3" cy="388.5" r="7.9" fill="#faeab4"/>
<circle cx="906.6" cy="390.9" r="11.4" fill="#7c1416"/><circle cx="908.2" cy="388.5" r="11.4" fill="#f7941d"/><circle cx="908.2" cy="388.5" r="7.9" fill="#faeab4"/>
<circle cx="942.5" cy="390.9" r="11.4" fill="#7c1416"/><circle cx="944.1" cy="388.5" r="11.4" fill="#f7941d"/><circle cx="944.1" cy="388.5" r="7.9" fill="#faeab4"/>
<circle cx="975.7" cy="390.9" r="11.4" fill="#7c1416"/><circle cx="977.3" cy="388.5" r="11.4" fill="#f7941d"/><circle cx="977.3" cy="388.5" r="7.9" fill="#faeab4"/>
<g font-family="Liberation Sans" font-weight="bold" text-anchor="middle" stroke-linejoin="round" font-size="80">
<text transform="translate(603.7 624.0) rotate(27.0) scale(0.93 1)" x="-1.6" y="29.3" fill="#1b1f5c" stroke="#1b1f5c" stroke-width="17.0">R</text><text transform="translate(669.5 649.5) rotate(12.0) scale(0.93 1)" x="-1.6" y="29.3" fill="#1b1f5c" stroke="#1b1f5c" stroke-width="17.0">O</text><text transform="translate(738.0 656.0) rotate(-1.5) scale(0.93 1)" x="-1.6" y="29.3" fill="#1b1f5c" stroke="#1b1f5c" stroke-width="17.0">A</text><text transform="translate(799.0 646.0) rotate(-13.0) scale(0.93 1)" x="-1.6" y="29.3" fill="#1b1f5c" stroke="#1b1f5c" stroke-width="17.0">S</text><text transform="translate(850.0 624.0) rotate(-26.5) scale(0.93 1)" x="-1.6" y="29.3" fill="#1b1f5c" stroke="#1b1f5c" stroke-width="17.0">T</text><text transform="translate(603.7 624.0) rotate(27.0) scale(0.93 1)" x="0" y="27.5" fill="#10aeea" stroke="#10aeea" stroke-width="17.0">R</text><text transform="translate(669.5 649.5) rotate(12.0) scale(0.93 1)" x="0" y="27.5" fill="#10aeea" stroke="#10aeea" stroke-width="17.0">O</text><text transform="translate(738.0 656.0) rotate(-1.5) scale(0.93 1)" x="0" y="27.5" fill="#10aeea" stroke="#10aeea" stroke-width="17.0">A</text><text transform="translate(799.0 646.0) rotate(-13.0) scale(0.93 1)" x="0" y="27.5" fill="#10aeea" stroke="#10aeea" stroke-width="17.0">S</text><text transform="translate(850.0 624.0) rotate(-26.5) scale(0.93 1)" x="0" y="27.5" fill="#10aeea" stroke="#10aeea" stroke-width="17.0">T</text><text transform="translate(603.7 624.0) rotate(27.0) scale(0.93 1)" x="0" y="27.5" fill="#f4f7f9" stroke="#f4f7f9" stroke-width="3.0">R</text><text transform="translate(669.5 649.5) rotate(12.0) scale(0.93 1)" x="0" y="27.5" fill="#f4f7f9" stroke="#f4f7f9" stroke-width="3.0">O</text><text transform="translate(738.0 656.0) rotate(-1.5) scale(0.93 1)" x="0" y="27.5" fill="#f4f7f9" stroke="#f4f7f9" stroke-width="3.0">A</text><text transform="translate(799.0 646.0) rotate(-13.0) scale(0.93 1)" x="0" y="27.5" fill="#f4f7f9" stroke="#f4f7f9" stroke-width="3.0">S</text><text transform="translate(850.0 624.0) rotate(-26.5) scale(0.93 1)" x="0" y="27.5" fill="#f4f7f9" stroke="#f4f7f9" stroke-width="3.0">T</text>
</g>
</svg>
</div>
<div id="panel" class="a">
 <div class="a" style="left:0;top:0;width:300px;height:14px;background:#464646;border-bottom:1px solid #3e3e3e"></div>
 <svg class="a" style="left:284px;top:3px" width="12" height="8" viewBox="0 0 12 8"><path d="M4 1 L1 4 L4 7 M9 1 L6 4 L9 7" fill="none" stroke="#d0d0d0" stroke-width="1.2"/></svg>
 <div class="a" style="left:0;top:14px;width:300px;height:27px;background:#464646"></div>
 <div class="a" style="left:70px;top:14px;width:1px;height:27px;background:#3e3e3e"></div>
 <span class="t" style="left:-2px;top:22px;font-size:11px;font-weight:bold;color:#d2d2d2">raphic Styles</span>
 <div class="a" style="left:284px;top:22px;width:10px;height:1.5px;background:#c8c8c8"></div>
 <div class="a" style="left:284px;top:26px;width:10px;height:1.5px;background:#c8c8c8"></div>
 <div class="a" style="left:284px;top:30px;width:10px;height:1.5px;background:#c8c8c8"></div>
 <div class="a" style="left:0;top:47px;width:290px;height:1px;background:#4a4a4a"></div>
 <div class="a" style="left:0;top:51px;width:266px;height:23px;background:#454545;border-radius:2px"></div>
 <span class="t" style="left:3px;top:55px;font-size:12px;font-style:italic;color:#cfcfcf">All</span>
 <svg class="a" style="left:275px;top:54px" width="16" height="18" viewBox="0 0 16 18"><path d="M0.5 1 H15.5 L9.5 9 V17 L6.5 14 V9 Z" fill="#c4c4c4"/></svg>
 <div class="a" style="left:0;top:83px;width:295px;height:591px;overflow:hidden">
<div class="row" style="top:0px;background:#4b627d"><div class="th"></div><span class="nm">Dad Joke copy 2</span><div class="dv"></div><div class="ci"></div></div>
<div class="row" style="top:21px"><div class="th"><div style="position:absolute;left:1px;top:7px;width:15px;height:4px;background:repeating-linear-gradient(90deg,#9ccc1c 0 2px,#d8ec9a 2px 3px)"></div></div><span class="nm">Dad Joke copy</span><div class="dv"></div><div class="ci"></div></div>
<div class="row" style="top:42px"><div class="th"><div style="position:absolute;left:1px;top:7px;width:15px;height:4px;background:repeating-linear-gradient(90deg,#111 0 2px,#888 2px 3px)"></div></div><span class="nm">Dad Joke</span><div class="dv"></div><div class="ci"></div></div>
<div class="row" style="top:63px"><div class="th"><div style="position:absolute;left:2px;top:6px;width:13px;height:1px;background:#f6c9a0"></div><div style="position:absolute;left:2px;top:11px;width:13px;height:1px;background:#f6c9a0"></div></div><span class="nm">lights on marquee</span><div class="dv"></div><div class="ci"></div></div>
<div class="row" style="top:84px"><div class="th"><div style="position:absolute;left:2px;top:6px;width:13px;height:1px;background:#f0a0a0"></div><div style="position:absolute;left:2px;top:11px;width:13px;height:1px;background:#f0a0a0"></div></div><span class="nm">Outline LIghts on Marquee</span><div class="dv"></div><div class="ci"></div></div>
<div class="row" style="top:105px"><div class="th"></div><span class="nm">Layer 26</span><div class="dv"></div><div class="ci"></div></div>
<div class="row" style="top:126px"><div class="th"><div style="position:absolute;left:0px;top:7px;width:4px;height:4px;border-radius:50%;background:#1a9ee0"></div><div style="position:absolute;left:13px;top:7px;width:4px;height:4px;border-radius:50%;background:#1a9ee0"></div></div><span class="nm">Circles top right</span><div class="dv"></div><div class="ci"></div></div>
<div class="row" style="top:147px"><div class="th"></div><span class="nm">Layer 34</span><div class="dv"></div><div class="ci"></div></div>
<div class="row" style="top:168px"><div class="th"><div style="position:absolute;left:0px;top:7px;width:3px;height:3px;border-radius:50%;background:#e06a3a"></div><div style="position:absolute;left:14px;top:7px;width:3px;height:3px;border-radius:50%;background:#e06a3a"></div></div><span class="nm">Red CIRCLES</span><div class="dv"></div><div class="ci"></div></div>
<div class="row" style="top:189px"><div class="th"><div style="position:absolute;left:1px;top:6px;width:15px;height:5px;border-top:1px solid #f5b060;border-bottom:1px solid #f5b060"></div></div><span class="nm">marquee stroke copy</span><div class="dv"></div><div class="ci"></div></div>
<div class="row" style="top:210px"><div class="th"><div style="position:absolute;left:1px;top:6px;width:15px;height:5px;border:1px solid #d88080"></div></div><span class="nm">marquee stroke</span><div class="dv"></div><div class="ci"></div></div>
<div class="row" style="top:231px"><div class="th"></div><span class="nm">whiite center for stars</span><div class="dv"></div><div class="ci"></div></div>
<div class="row" style="top:252px"><div class="th"><div style="position:absolute;left:7px;top:0px;width:3px;height:2px;background:#f0a040"></div><div style="position:absolute;left:7px;top:15px;width:3px;height:2px;background:#f0a040"></div></div><span class="nm">Stars</span><div class="dv"></div><div class="ci"></div></div>
<div class="row" style="top:273px"><div class="th"></div><span class="nm">Layer 19</span><div class="dv"></div><div class="ci"></div></div>
<div class="row" style="top:294px"><div class="th"></div><span class="nm">Layer 29</span><div class="dv"></div><div class="ci"></div></div>
<div class="row" style="top:315px"><div class="th"><div style="position:absolute;left:0px;top:7px;width:3px;height:3px;background:#5ab8e8"></div><div style="position:absolute;left:14px;top:7px;width:3px;height:3px;background:#5ab8e8"></div></div><span class="nm">short lines on marquee</span><div class="dv"></div><div class="ci"></div></div>
<div class="row" style="top:336px"><div class="th"><div style="position:absolute;left:1px;top:6px;width:15px;height:5px;background:#cfe8f6"></div></div><span class="nm">Horizontal lines</span><div class="dv"></div><div class="ci"></div></div>
<div class="row" style="top:357px"><div class="th"><div style="position:absolute;left:0px;top:6px;width:17px;height:5px;background:#0b2440"></div></div><span class="nm">marquee background</span><div class="dv"></div><div class="ci"></div></div>
<div class="row" style="top:378px"><div class="th"><svg style="position:absolute;left:0;top:2px" width="17" height="14" viewBox="0 0 17 14"><path d="M1 12 Q2 8 4 10 Q4 6 6 4 Q6 9 8 10 Q9 6 11 3 Q11 8 13 10 Q14 7 16 6 Q15 10 16 12Z" fill="#e8a018"/><path d="M5 12 Q6 8 7 11 Q9 7 11 6 Q10 10 13 12Z" fill="#b8321a"/></svg></div><span class="nm">Fire</span><div class="dv"></div><div class="ci"></div></div>
<div class="row" style="top:399px"><div class="th"><svg style="position:absolute;left:0;top:2px" width="17" height="14" viewBox="0 0 17 14"><path d="M1 12 Q2 8 4 10 Q4 6 6 4 Q6 9 8 10 Q9 6 11 3 Q11 8 13 10 Q14 7 16 6 Q15 10 16 12Z" fill="#e8a018"/><path d="M5 12 Q6 8 7 11 Q9 7 11 6 Q10 10 13 12Z" fill="#b8321a"/></svg></div><span class="nm">Layer 27</span><div class="dv"></div><div class="ci"></div></div>
<div class="row" style="top:420px"><div class="th"><div style="position:absolute;left:0px;top:0px;width:17px;height:12px;border-radius:50%;border-bottom:1.5px solid #5ab8e8"></div></div><span class="nm">line under roast</span><div class="dv"></div><div class="ci"></div></div>
<div class="row" style="top:441px"><div class="th"></div><span class="nm">Layer 28</span><div class="dv"></div><div class="ci"></div></div>
<div class="row" style="top:462px"><div class="th"><div style="position:absolute;left:1px;top:6px;width:15px;height:4px;background:repeating-linear-gradient(90deg,#3aa0e0 0 2px,#bfe0f6 2px 3px)"></div></div><span class="nm">outer ellipse</span><div class="dv"></div><div class="ci"></div></div>
<div class="row" style="top:483px"><div class="th"></div><span class="nm">Roast Gradient</span><div class="dv"></div><div class="ci"></div></div>
<div class="row" style="top:504px"><div class="th"><div style="position:absolute;left:1px;top:6px;width:15px;height:4px;background:repeating-linear-gradient(90deg,#6a80b0 0 2px,#c8d0e6 2px 3px)"></div></div><span class="nm">Layer 32</span><div class="dv"></div><div class="ci"></div></div>
<div class="row" style="top:525px"><div class="th"><div style="position:absolute;left:1px;top:5px;width:15px;height:10px;border-radius:50%;border-top:2px solid #7ac4ec"></div></div><span class="nm">celebrity ellipse</span><div class="dv"></div><div class="ci"></div></div>
<div class="row" style="top:546px"><div class="th"></div><span class="nm">Layer 17</span><div class="dv"></div><div class="ci"></div></div>
<div class="row" style="top:567px"><div class="th"><div style="position:absolute;left:1px;top:5px;width:15px;height:14px;border-radius:50%;border-top:1.5px solid #6ab8e8"></div></div><span class="nm">inner ellipse</span><div class="dv"></div><div class="ci"></div></div>
<div class="row" style="top:588px"><div class="th"></div><span class="nm"></span><div class="dv"></div><div class="ci"></div></div>
 </div>
 <div class="a" style="left:283px;top:83px;width:11px;height:590px;background:#4d4d4d"></div>
 <div class="a" style="left:284px;top:100px;width:9px;height:480px;background:#606060;border-radius:4px"></div>
 <div class="chev" style="left:286px;top:88px;transform:rotate(225deg);width:5px;height:5px"></div>
 <div class="chev" style="left:286px;top:663px;width:5px;height:5px"></div>
 <div class="a" style="left:278px;top:83px;width:0;height:0;border-top:6px solid #e0e0e0;border-left:6px solid transparent"></div>
 <div class="a" style="left:0;top:673px;width:300px;height:28px;background:#535353"></div>
 <div class="a" style="left:0;top:693px;width:300px;height:8px;background:#4b4b4b;border-top:1px solid #444"></div>
 <svg class="a" style="left:105px;top:673px" width="170" height="20" viewBox="0 0 170 20" fill="none" stroke="#c8c8c8" stroke-width="1.2">
  <rect x="3" y="5" width="10" height="10"/><path d="M1 5H15M3 3V17M13 3V17M1 15H11"/><path d="M11 11h5v7l-2.5-2-2.5 2z" fill="#c8c8c8" stroke="none"/>
  <path d="M42 6H35V16H45V9M40 11L46 5M42 5H46V9"/>
  <circle cx="60" cy="9" r="4" stroke="#7a7a7a"/><path d="M63 12L67 16" stroke="#7a7a7a"/>
  <rect x="80" y="5" width="8" height="8"/><rect x="83" y="8" width="8" height="8"/><rect x="82" y="7" width="5" height="5" fill="#c8c8c8" stroke="none"/>
  <path d="M103 4V9H108M106 7L108 9L106 11"/><rect x="110" y="5" width="10" height="10"/><path d="M115 7V13M112 10H118"/>
  <rect x="131" y="5" width="11" height="11"/><path d="M136.5 7.5V13.5M133.5 10.5H139.5"/>
  <path d="M155 6H167M158 6V4H164V6M156 6L157 17H165L166 6M159 8V15M161 8V15M163 8V15"/>
 </svg>
 <div class="a" style="left:105px;top:695px;width:20px;height:4px;background:repeating-linear-gradient(90deg,#2e2e2e 0 1px,transparent 1px 2px)"></div>
</div>
<div id="vscroll" class="a">
 <div class="chev" style="left:5px;top:9px;transform:rotate(225deg);width:6px;height:6px;border-color:#999"></div>
 <div class="a" style="left:3px;top:360px;width:10px;height:26px;border-radius:5px;background:#6a6a6a"></div>
</div>
<div id="rdiv" class="a"></div>
<div id="rpanel" class="a">
 <div class="a" style="left:0;top:0;width:31px;height:12px;background:#464646"></div>
 <svg class="a" style="left:22px;top:3px" width="12" height="8" viewBox="0 0 12 8"><path d="M4 1 L1 4 L4 7 M9 1 L6 4 L9 7" fill="none" stroke="#d0d0d0" stroke-width="1.2"/></svg>
 <div class="a" style="left:0;top:13px;width:31px;height:40px;background:#535353;border-bottom:2px solid #454545"></div>
 <div class="a" style="left:9px;top:19px;width:18px;height:3px;background:repeating-linear-gradient(90deg,#343434 0 1px,transparent 1px 2px)"></div>
 <svg class="a" style="left:11px;top:29px" width="13" height="16" viewBox="0 0 13 16"><path d="M1 1 L12 8 L1 15Z" fill="#c8c8c8"/></svg>
 <div class="a" style="left:0;top:55px;width:31px;height:67px;background:#535353;border-bottom:2px solid #454545"></div>
 <div class="a" style="left:9px;top:60px;width:18px;height:3px;background:repeating-linear-gradient(90deg,#343434 0 1px,transparent 1px 2px)"></div>
 <svg class="a" style="left:10px;top:68px" width="17" height="17" viewBox="0 0 17 17"><circle cx="8.5" cy="8.5" r="8" fill="#c8c8c8"/><circle cx="8.5" cy="4.5" r="1.5" fill="#535353"/><path d="M6 7H9.8V12.5H11V13.5H6V12.5H7.3V8H6Z" fill="#535353"/></svg>
 <svg class="a" style="left:10px;top:96px" width="18" height="16" viewBox="0 0 18 16"><path d="M3 5 H16 V15 H3Z" fill="#c8c8c8"/><circle cx="10" cy="8" r="4" fill="#535353"/><circle cx="4.5" cy="3.5" r="3.5" fill="#c8c8c8"/></svg>
 <div class="a" style="left:0;top:124px;width:31px;height:670px;background:#535353"></div>
</div>
<div id="status" class="a">
 <span class="t" style="left:-3px;top:7px;font-size:11px;color:#d4d4d4">ath or anchor point of an object</span>
 <span class="t" style="left:162px;top:7px;font-size:11px;color:#d4d4d4">|</span>
 <span class="t" style="left:172px;top:7px;font-size:11px;font-weight:bold;color:#dedede;letter-spacing:-0.1px">Shift+Click</span>
 <span class="t" style="left:232px;top:7px;font-size:11px;color:#d4d4d4;letter-spacing:-0.1px">to select multiple anchor points or paths</span>
 <div class="chev" style="left:1154px;top:12px"></div>
</div>
<div id="bottombar" class="a">
 <div class="a" style="left:0;top:0;width:40px;height:17px;background:#474747"></div>
 <span class="t" style="left:0px;top:2px;font-size:10px;color:#ddd">&deg;</span>
 <div class="box" style="left:40px;top:0;width:18px;height:17px;border-color:#444"></div>
 <div class="chev" style="left:46px;top:4px;width:5px;height:5px"></div>
 <svg class="a" style="left:64px;top:3px" width="36" height="11" viewBox="0 0 36 11"><rect x="2" y="1" width="1.3" height="9" fill="#6e6e6e"/><path d="M10 1 L4 5.5 L10 10Z M26 1 L20 5.5 L26 10Z" fill="#6e6e6e"/></svg>
 <div class="a" style="left:100px;top:0;width:40px;height:17px;background:#474747"></div>
 <span class="t" style="left:104px;top:4px;font-size:11px;color:#e0e0e0">1</span>
 <div class="box" style="left:140px;top:0;width:18px;height:17px;border-color:#444"></div>
 <div class="chev" style="left:146px;top:4px;width:5px;height:5px"></div>
 <svg class="a" style="left:165px;top:3px" width="36" height="11" viewBox="0 0 36 11"><path d="M2 1 L8 5.5 L2 10Z M18 1 L24 5.5 L18 10Z" fill="#6e6e6e"/><rect x="25" y="1" width="1.3" height="9" fill="#6e6e6e"/></svg>
 <div class="a" style="left:199px;top:0;width:1px;height:17px;background:#444"></div>
 <span class="t" style="left:261px;top:4px;font-size:11px;color:#d8d8d8">Direct Selection</span>
 <svg class="a" style="left:404px;top:3px" width="10" height="11" viewBox="0 0 10 11"><path d="M2 1 L8 5.5 L2 10Z" fill="#d0d0d0"/></svg>
 <div class="chev" style="left:425px;top:6px;transform:rotate(135deg);width:5px;height:5px;border-color:#888"></div>
 <div class="a" style="left:765px;top:3px;width:26px;height:11px;border-radius:6px;background:#5e5e5e"></div>
 <div class="chev" style="left:1137px;top:6px;transform:rotate(-45deg);width:5px;height:5px;border-color:#888"></div>
</div>
<div id="wall2" class="a"></div>
</body></html>
